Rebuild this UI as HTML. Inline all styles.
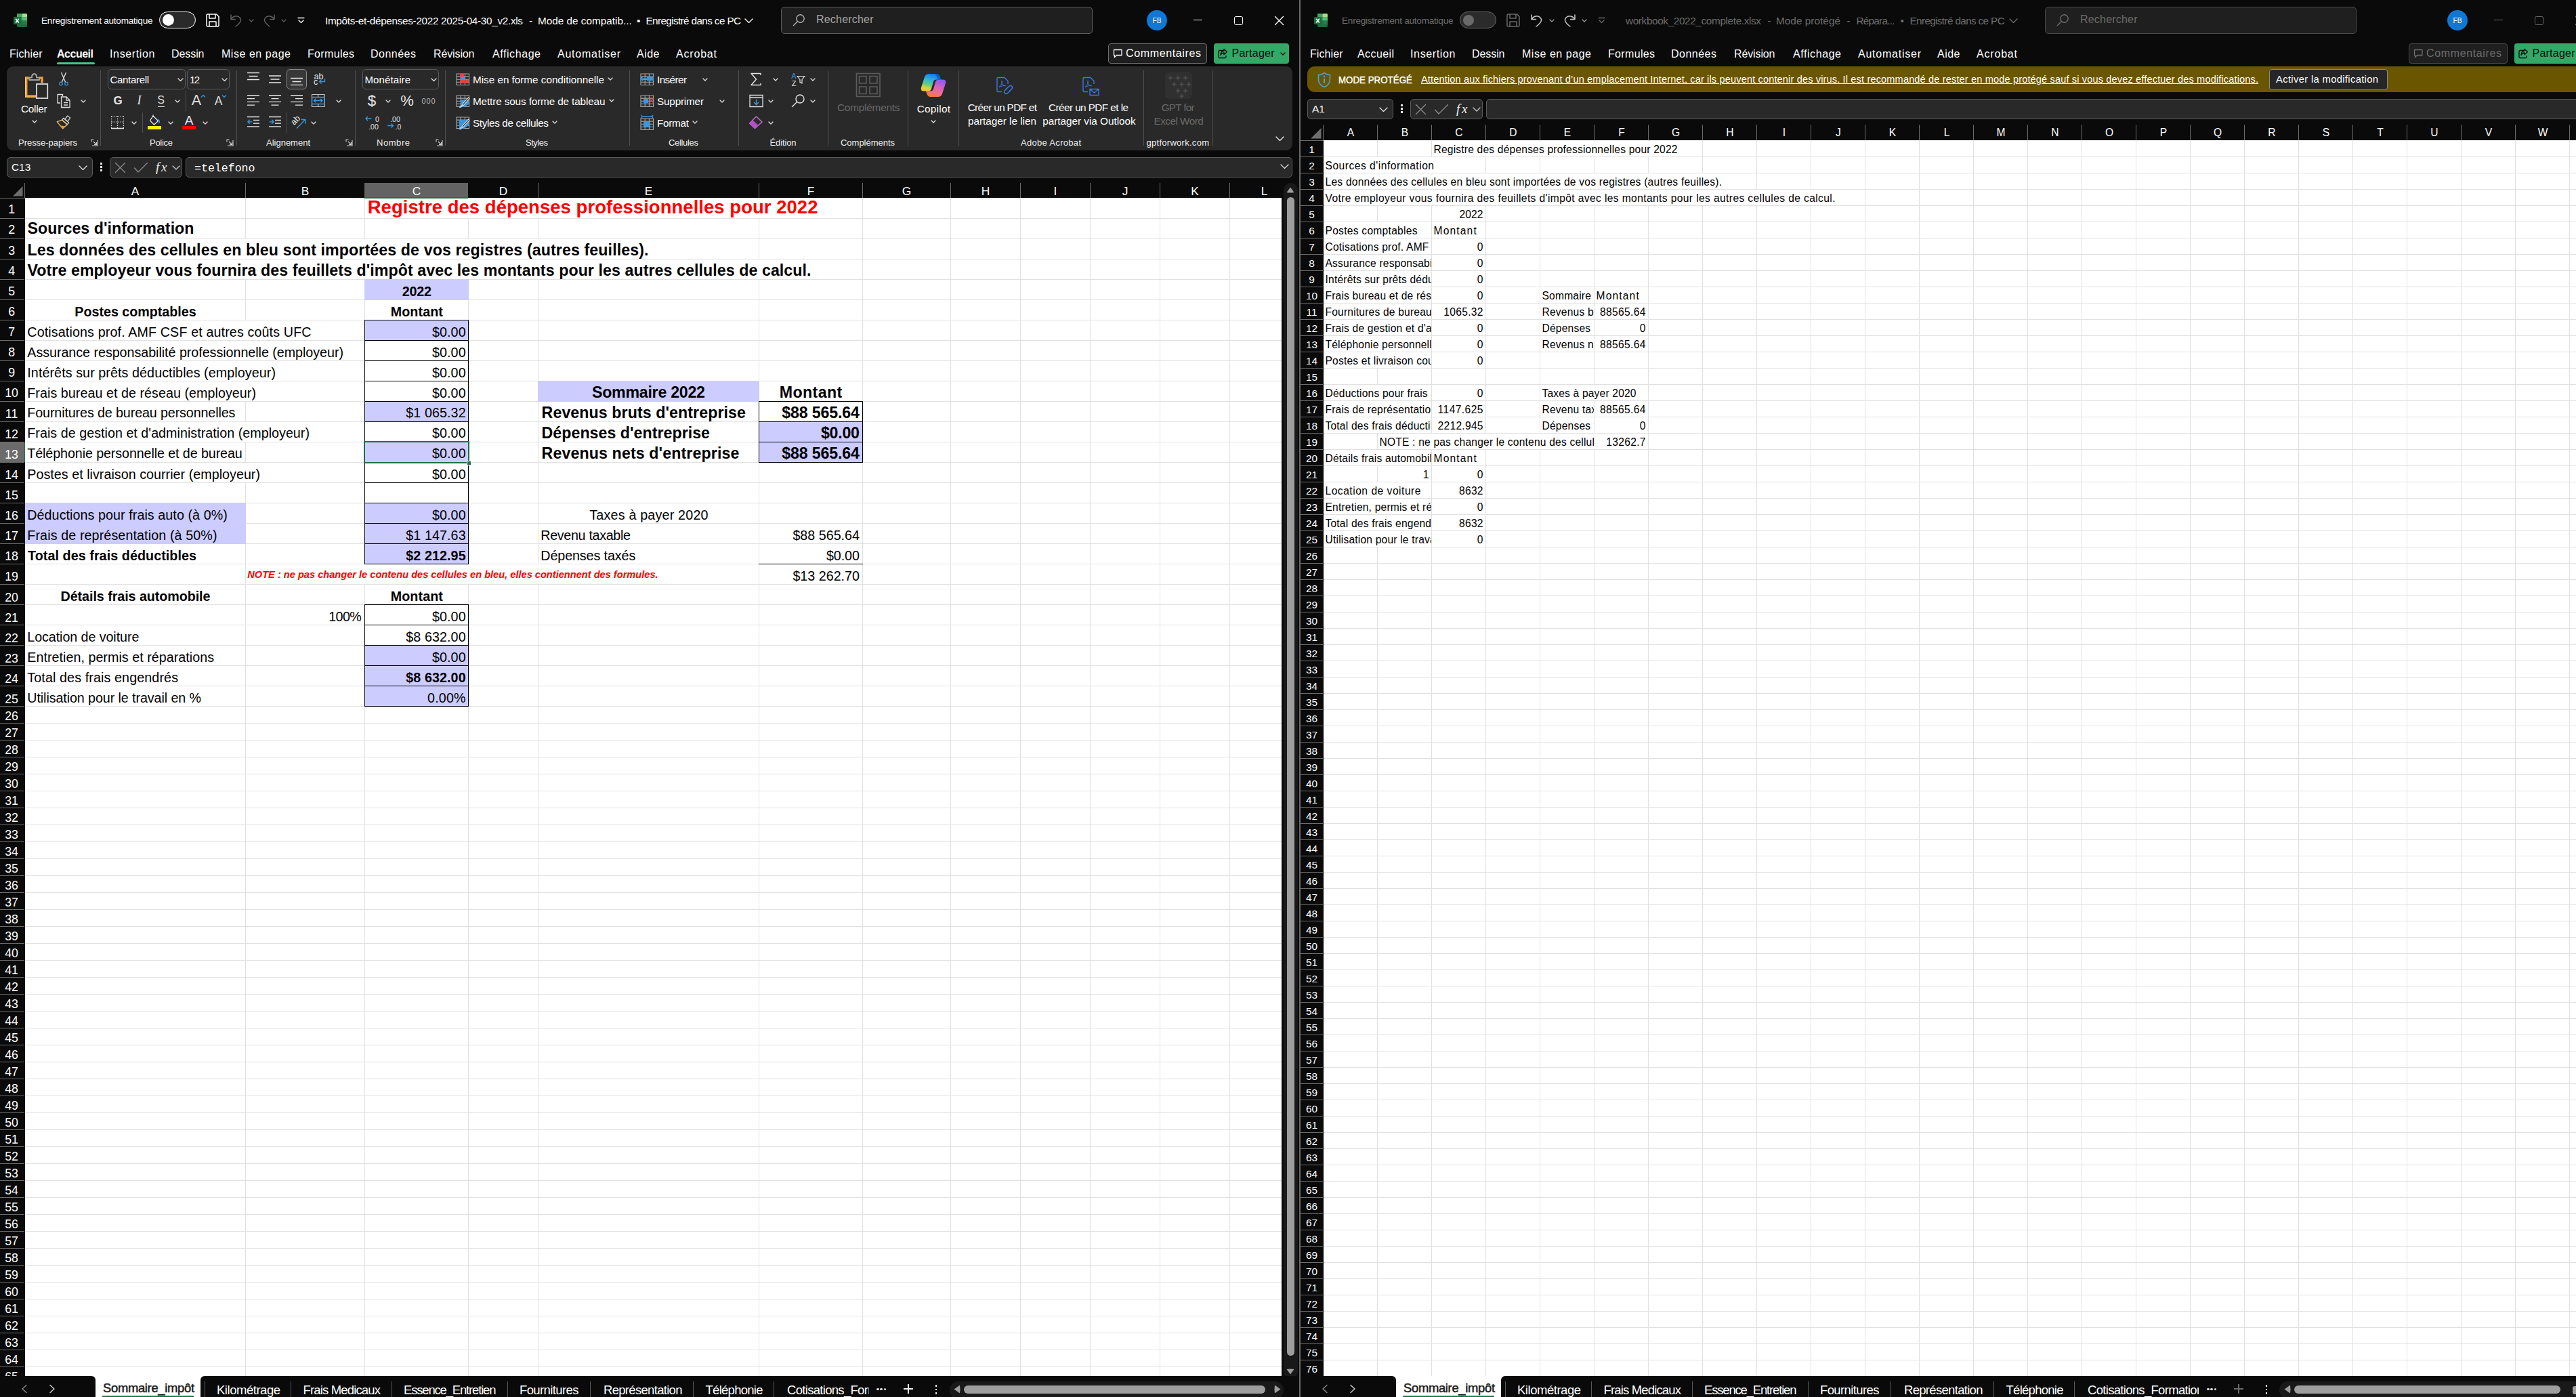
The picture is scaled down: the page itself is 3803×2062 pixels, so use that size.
<!DOCTYPE html>
<html lang="fr"><head><meta charset="utf-8"><title>Excel</title>
<style>
html,body{margin:0;padding:0}
body{width:3803px;height:2062px;background:#0a0a0a;overflow:hidden;position:relative;font-family:"Liberation Sans", sans-serif;}
div,span,svg{position:absolute;display:block}
span{white-space:pre}
</style></head>
<body>
<div style="left:0;top:0;width:1918px;height:2062px;overflow:hidden">
<div style="left:37px;top:292px;width:1855px;height:1739px;background:#fff;"></div>
<div style="left:37px;top:322px;width:1855px;height:1px;background:#e1e1e1;"></div>
<div style="left:37px;top:352px;width:1855px;height:1px;background:#e1e1e1;"></div>
<div style="left:37px;top:382px;width:1855px;height:1px;background:#e1e1e1;"></div>
<div style="left:37px;top:412px;width:1855px;height:1px;background:#e1e1e1;"></div>
<div style="left:37px;top:442px;width:1855px;height:1px;background:#e1e1e1;"></div>
<div style="left:37px;top:472px;width:1855px;height:1px;background:#e1e1e1;"></div>
<div style="left:37px;top:502px;width:1855px;height:1px;background:#e1e1e1;"></div>
<div style="left:37px;top:532px;width:1855px;height:1px;background:#e1e1e1;"></div>
<div style="left:37px;top:562px;width:1855px;height:1px;background:#e1e1e1;"></div>
<div style="left:37px;top:592px;width:1855px;height:1px;background:#e1e1e1;"></div>
<div style="left:37px;top:622px;width:1855px;height:1px;background:#e1e1e1;"></div>
<div style="left:37px;top:652px;width:1855px;height:1px;background:#e1e1e1;"></div>
<div style="left:37px;top:682px;width:1855px;height:1px;background:#e1e1e1;"></div>
<div style="left:37px;top:712px;width:1855px;height:1px;background:#e1e1e1;"></div>
<div style="left:37px;top:742px;width:1855px;height:1px;background:#e1e1e1;"></div>
<div style="left:37px;top:772px;width:1855px;height:1px;background:#e1e1e1;"></div>
<div style="left:37px;top:802px;width:1855px;height:1px;background:#e1e1e1;"></div>
<div style="left:37px;top:832px;width:1855px;height:1px;background:#e1e1e1;"></div>
<div style="left:37px;top:862px;width:1855px;height:1px;background:#e1e1e1;"></div>
<div style="left:37px;top:892px;width:1855px;height:1px;background:#e1e1e1;"></div>
<div style="left:37px;top:922px;width:1855px;height:1px;background:#e1e1e1;"></div>
<div style="left:37px;top:952px;width:1855px;height:1px;background:#e1e1e1;"></div>
<div style="left:37px;top:982px;width:1855px;height:1px;background:#e1e1e1;"></div>
<div style="left:37px;top:1012px;width:1855px;height:1px;background:#e1e1e1;"></div>
<div style="left:37px;top:1042px;width:1855px;height:1px;background:#e1e1e1;"></div>
<div style="left:37px;top:1067px;width:1855px;height:1px;background:#e1e1e1;"></div>
<div style="left:37px;top:1092px;width:1855px;height:1px;background:#e1e1e1;"></div>
<div style="left:37px;top:1117px;width:1855px;height:1px;background:#e1e1e1;"></div>
<div style="left:37px;top:1142px;width:1855px;height:1px;background:#e1e1e1;"></div>
<div style="left:37px;top:1167px;width:1855px;height:1px;background:#e1e1e1;"></div>
<div style="left:37px;top:1192px;width:1855px;height:1px;background:#e1e1e1;"></div>
<div style="left:37px;top:1217px;width:1855px;height:1px;background:#e1e1e1;"></div>
<div style="left:37px;top:1242px;width:1855px;height:1px;background:#e1e1e1;"></div>
<div style="left:37px;top:1267px;width:1855px;height:1px;background:#e1e1e1;"></div>
<div style="left:37px;top:1292px;width:1855px;height:1px;background:#e1e1e1;"></div>
<div style="left:37px;top:1317px;width:1855px;height:1px;background:#e1e1e1;"></div>
<div style="left:37px;top:1342px;width:1855px;height:1px;background:#e1e1e1;"></div>
<div style="left:37px;top:1367px;width:1855px;height:1px;background:#e1e1e1;"></div>
<div style="left:37px;top:1392px;width:1855px;height:1px;background:#e1e1e1;"></div>
<div style="left:37px;top:1417px;width:1855px;height:1px;background:#e1e1e1;"></div>
<div style="left:37px;top:1442px;width:1855px;height:1px;background:#e1e1e1;"></div>
<div style="left:37px;top:1467px;width:1855px;height:1px;background:#e1e1e1;"></div>
<div style="left:37px;top:1492px;width:1855px;height:1px;background:#e1e1e1;"></div>
<div style="left:37px;top:1517px;width:1855px;height:1px;background:#e1e1e1;"></div>
<div style="left:37px;top:1542px;width:1855px;height:1px;background:#e1e1e1;"></div>
<div style="left:37px;top:1567px;width:1855px;height:1px;background:#e1e1e1;"></div>
<div style="left:37px;top:1592px;width:1855px;height:1px;background:#e1e1e1;"></div>
<div style="left:37px;top:1617px;width:1855px;height:1px;background:#e1e1e1;"></div>
<div style="left:37px;top:1642px;width:1855px;height:1px;background:#e1e1e1;"></div>
<div style="left:37px;top:1667px;width:1855px;height:1px;background:#e1e1e1;"></div>
<div style="left:37px;top:1692px;width:1855px;height:1px;background:#e1e1e1;"></div>
<div style="left:37px;top:1717px;width:1855px;height:1px;background:#e1e1e1;"></div>
<div style="left:37px;top:1742px;width:1855px;height:1px;background:#e1e1e1;"></div>
<div style="left:37px;top:1767px;width:1855px;height:1px;background:#e1e1e1;"></div>
<div style="left:37px;top:1792px;width:1855px;height:1px;background:#e1e1e1;"></div>
<div style="left:37px;top:1817px;width:1855px;height:1px;background:#e1e1e1;"></div>
<div style="left:37px;top:1842px;width:1855px;height:1px;background:#e1e1e1;"></div>
<div style="left:37px;top:1867px;width:1855px;height:1px;background:#e1e1e1;"></div>
<div style="left:37px;top:1892px;width:1855px;height:1px;background:#e1e1e1;"></div>
<div style="left:37px;top:1917px;width:1855px;height:1px;background:#e1e1e1;"></div>
<div style="left:37px;top:1942px;width:1855px;height:1px;background:#e1e1e1;"></div>
<div style="left:37px;top:1967px;width:1855px;height:1px;background:#e1e1e1;"></div>
<div style="left:37px;top:1992px;width:1855px;height:1px;background:#e1e1e1;"></div>
<div style="left:37px;top:2017px;width:1855px;height:1px;background:#e1e1e1;"></div>
<div style="left:362px;top:292px;width:1px;height:1739px;background:#e1e1e1;"></div>
<div style="left:538px;top:292px;width:1px;height:1739px;background:#e1e1e1;"></div>
<div style="left:691px;top:292px;width:1px;height:1739px;background:#e1e1e1;"></div>
<div style="left:794px;top:292px;width:1px;height:1739px;background:#e1e1e1;"></div>
<div style="left:1120px;top:292px;width:1px;height:1739px;background:#e1e1e1;"></div>
<div style="left:1273px;top:292px;width:1px;height:1739px;background:#e1e1e1;"></div>
<div style="left:1403px;top:292px;width:1px;height:1739px;background:#e1e1e1;"></div>
<div style="left:1506px;top:292px;width:1px;height:1739px;background:#e1e1e1;"></div>
<div style="left:1609px;top:292px;width:1px;height:1739px;background:#e1e1e1;"></div>
<div style="left:1712px;top:292px;width:1px;height:1739px;background:#e1e1e1;"></div>
<div style="left:1815px;top:292px;width:1px;height:1739px;background:#e1e1e1;"></div>
<div style="left:691px;top:293px;width:1px;height:29px;background:#fff;"></div>
<div style="left:794px;top:293px;width:1px;height:29px;background:#fff;"></div>
<div style="left:1120px;top:293px;width:1px;height:29px;background:#fff;"></div>
<div style="left:362px;top:353px;width:1px;height:29px;background:#fff;"></div>
<div style="left:538px;top:353px;width:1px;height:29px;background:#fff;"></div>
<div style="left:691px;top:353px;width:1px;height:29px;background:#fff;"></div>
<div style="left:794px;top:353px;width:1px;height:29px;background:#fff;"></div>
<div style="left:362px;top:383px;width:1px;height:29px;background:#fff;"></div>
<div style="left:538px;top:383px;width:1px;height:29px;background:#fff;"></div>
<div style="left:691px;top:383px;width:1px;height:29px;background:#fff;"></div>
<div style="left:794px;top:383px;width:1px;height:29px;background:#fff;"></div>
<div style="left:1120px;top:383px;width:1px;height:29px;background:#fff;"></div>
<div style="left:362px;top:473px;width:1px;height:29px;background:#fff;"></div>
<div style="left:362px;top:503px;width:1px;height:29px;background:#fff;"></div>
<div style="left:362px;top:533px;width:1px;height:29px;background:#fff;"></div>
<div style="left:362px;top:563px;width:1px;height:29px;background:#fff;"></div>
<div style="left:362px;top:623px;width:1px;height:29px;background:#fff;"></div>
<div style="left:362px;top:683px;width:1px;height:29px;background:#fff;"></div>
<div style="left:538px;top:833px;width:1px;height:29px;background:#fff;"></div>
<div style="left:691px;top:833px;width:1px;height:29px;background:#fff;"></div>
<div style="left:794px;top:833px;width:1px;height:29px;background:#fff;"></div>
<div style="left:538px;top:412px;width:154px;height:31px;background:#ccccff;"></div>
<div style="left:538px;top:472px;width:154px;height:31px;background:#ccccff;"></div>
<div style="left:538px;top:592px;width:154px;height:31px;background:#ccccff;"></div>
<div style="left:538px;top:652px;width:154px;height:31px;background:#ccccff;"></div>
<div style="left:36px;top:742px;width:327px;height:31px;background:#ccccff;"></div>
<div style="left:36px;top:772px;width:327px;height:31px;background:#ccccff;"></div>
<div style="left:538px;top:742px;width:154px;height:31px;background:#ccccff;"></div>
<div style="left:538px;top:772px;width:154px;height:31px;background:#ccccff;"></div>
<div style="left:538px;top:802px;width:154px;height:31px;background:#ccccff;"></div>
<div style="left:538px;top:952px;width:154px;height:31px;background:#ccccff;"></div>
<div style="left:538px;top:982px;width:154px;height:31px;background:#ccccff;"></div>
<div style="left:538px;top:1012px;width:154px;height:31px;background:#ccccff;"></div>
<div style="left:794px;top:562px;width:327px;height:31px;background:#ccccff;"></div>
<div style="left:1120px;top:622px;width:154px;height:31px;background:#ccccff;"></div>
<div style="left:1120px;top:652px;width:154px;height:31px;background:#ccccff;"></div>
<div style="left:538px;top:472px;width:154px;height:31px;border:1px solid #000;box-sizing:border-box;"></div>
<div style="left:538px;top:502px;width:154px;height:31px;border:1px solid #000;box-sizing:border-box;"></div>
<div style="left:538px;top:532px;width:154px;height:31px;border:1px solid #000;box-sizing:border-box;"></div>
<div style="left:538px;top:562px;width:154px;height:31px;border:1px solid #000;box-sizing:border-box;"></div>
<div style="left:538px;top:592px;width:154px;height:31px;border:1px solid #000;box-sizing:border-box;"></div>
<div style="left:538px;top:622px;width:154px;height:31px;border:1px solid #000;box-sizing:border-box;"></div>
<div style="left:538px;top:652px;width:154px;height:31px;border:1px solid #000;box-sizing:border-box;"></div>
<div style="left:538px;top:682px;width:154px;height:31px;border:1px solid #000;box-sizing:border-box;"></div>
<div style="left:538px;top:712px;width:154px;height:31px;border:1px solid #000;box-sizing:border-box;"></div>
<div style="left:538px;top:742px;width:154px;height:31px;border:1px solid #000;box-sizing:border-box;"></div>
<div style="left:538px;top:772px;width:154px;height:31px;border:1px solid #000;box-sizing:border-box;"></div>
<div style="left:538px;top:802px;width:154px;height:31px;border:1px solid #000;box-sizing:border-box;"></div>
<div style="left:538px;top:892px;width:154px;height:31px;border:1px solid #000;box-sizing:border-box;"></div>
<div style="left:538px;top:922px;width:154px;height:31px;border:1px solid #000;box-sizing:border-box;"></div>
<div style="left:538px;top:952px;width:154px;height:31px;border:1px solid #000;box-sizing:border-box;"></div>
<div style="left:538px;top:982px;width:154px;height:31px;border:1px solid #000;box-sizing:border-box;"></div>
<div style="left:538px;top:1012px;width:154px;height:31px;border:1px solid #000;box-sizing:border-box;"></div>
<div style="left:1120px;top:592px;width:154px;height:31px;border:1px solid #000;box-sizing:border-box;"></div>
<div style="left:1120px;top:622px;width:154px;height:31px;border:1px solid #000;box-sizing:border-box;"></div>
<div style="left:1120px;top:652px;width:154px;height:31px;border:1px solid #000;box-sizing:border-box;"></div>
<div style="left:1120px;top:832px;width:154px;height:1px;background:#000;"></div>
<div style="left:537px;top:651px;width:156px;height:33px;border:2px solid #1e7145;box-sizing:border-box;"></div>
<div style="left:689px;top:680px;width:7px;height:7px;background:#fff;"></div>
<div style="left:690px;top:681px;width:5px;height:5px;background:#1e7145;"></div>
<span style="left:542.70px;top:287.97px;line-height:35px;font-size:27.5px;color:#ff0000;font-weight:700;letter-spacing:0.032px;">Registre des dépenses professionnelles pour 2022</span>
<span style="left:40.50px;top:323.46px;line-height:29px;font-size:23.2px;color:#000;font-weight:700;letter-spacing:0.042px;">Sources d&#x27;information</span>
<span style="left:40.50px;top:354.96px;line-height:29px;font-size:23.2px;color:#000;font-weight:700;letter-spacing:0.104px;">Les données des cellules en bleu sont importées de vos registres (autres feuilles).</span>
<span style="left:40.50px;top:384.96px;line-height:29px;font-size:23.2px;color:#000;font-weight:700;letter-spacing:0.074px;">Votre employeur vous fournira des feuillets d&#x27;impôt avec les montants pour les autres cellules de calcul.</span>
<span style="left:593.70px;top:417.87px;line-height:25px;font-size:19.7px;color:#000;font-weight:700;letter-spacing:-0.204px;">2022</span>
<span style="left:110.35px;top:447.87px;line-height:25px;font-size:19.7px;color:#000;font-weight:700;letter-spacing:-0.009px;">Postes comptables</span>
<span style="left:576.70px;top:447.87px;line-height:25px;font-size:19.7px;color:#000;font-weight:700;letter-spacing:0.109px;">Montant</span>
<span style="left:40.30px;top:477.87px;line-height:25px;font-size:19.7px;color:#000;letter-spacing:0.128px;">Cotisations prof. AMF CSF et autres coûts UFC</span>
<span style="left:40.30px;top:507.87px;line-height:25px;font-size:19.7px;color:#000;letter-spacing:-0.033px;">Assurance responsabilité professionnelle (employeur)</span>
<span style="left:40.30px;top:537.87px;line-height:25px;font-size:19.7px;color:#000;letter-spacing:0.083px;">Intérêts sur prêts déductibles (employeur)</span>
<span style="left:40.30px;top:567.87px;line-height:25px;font-size:19.7px;color:#000;letter-spacing:0.049px;">Frais bureau et de réseau (employeur)</span>
<span style="left:40.30px;top:597.17px;line-height:25px;font-size:19.7px;color:#000;letter-spacing:-0.113px;">Fournitures de bureau personnelles</span>
<span style="left:40.30px;top:627.17px;line-height:25px;font-size:19.7px;color:#000;letter-spacing:0.032px;">Frais de gestion et d&#x27;administration (employeur)</span>
<span style="left:40.30px;top:657.17px;line-height:25px;font-size:19.7px;color:#000;letter-spacing:-0.095px;">Téléphonie personnelle et de bureau</span>
<span style="left:40.30px;top:687.87px;line-height:25px;font-size:19.7px;color:#000;letter-spacing:0.032px;">Postes et livraison courrier (employeur)</span>
<span style="left:40.30px;top:747.87px;line-height:25px;font-size:19.7px;color:#000;letter-spacing:0.069px;">Déductions pour frais auto (à 0%)</span>
<span style="left:40.30px;top:777.87px;line-height:25px;font-size:19.7px;color:#000;letter-spacing:0.111px;">Frais de représentation (à 50%)</span>
<span style="left:40.30px;top:927.87px;line-height:25px;font-size:19.7px;color:#000;letter-spacing:-0.071px;">Location de voiture</span>
<span style="left:40.30px;top:958.37px;line-height:25px;font-size:19.7px;color:#000;letter-spacing:0.033px;">Entretien, permis et réparations</span>
<span style="left:40.30px;top:988.37px;line-height:25px;font-size:19.7px;color:#000;letter-spacing:0.113px;">Total des frais engendrés</span>
<span style="left:40.30px;top:1018.37px;line-height:25px;font-size:19.7px;color:#000;letter-spacing:-0.085px;">Utilisation pour le travail en %</span>
<span style="left:41.00px;top:807.87px;line-height:25px;font-size:19.7px;color:#000;font-weight:700;letter-spacing:0.081px;">Total des frais déductibles</span>
<span style="left:89.51px;top:867.87px;line-height:25px;font-size:19.7px;color:#000;font-weight:700;letter-spacing:-0.048px;">Détails frais automobile</span>
<span style="left:576.70px;top:867.87px;line-height:25px;font-size:19.7px;color:#000;font-weight:700;letter-spacing:0.109px;">Montant</span>
<span style="left:638.00px;top:477.87px;line-height:25px;font-size:19.7px;color:#000;letter-spacing:0.08px;">$0.00</span>
<span style="left:638.00px;top:507.87px;line-height:25px;font-size:19.7px;color:#000;letter-spacing:0.08px;">$0.00</span>
<span style="left:638.00px;top:537.87px;line-height:25px;font-size:19.7px;color:#000;letter-spacing:0.08px;">$0.00</span>
<span style="left:638.00px;top:567.87px;line-height:25px;font-size:19.7px;color:#000;letter-spacing:0.08px;">$0.00</span>
<span style="left:638.00px;top:627.17px;line-height:25px;font-size:19.7px;color:#000;letter-spacing:0.08px;">$0.00</span>
<span style="left:638.00px;top:657.17px;line-height:25px;font-size:19.7px;color:#000;letter-spacing:0.08px;">$0.00</span>
<span style="left:638.00px;top:687.87px;line-height:25px;font-size:19.7px;color:#000;letter-spacing:0.08px;">$0.00</span>
<span style="left:638.00px;top:747.87px;line-height:25px;font-size:19.7px;color:#000;letter-spacing:0.08px;">$0.00</span>
<span style="left:638.00px;top:897.87px;line-height:25px;font-size:19.7px;color:#000;letter-spacing:0.08px;">$0.00</span>
<span style="left:638.00px;top:958.37px;line-height:25px;font-size:19.7px;color:#000;letter-spacing:0.08px;">$0.00</span>
<span style="left:599.30px;top:597.17px;line-height:25px;font-size:19.7px;color:#000;letter-spacing:0.088px;">$1 065.32</span>
<span style="left:599.30px;top:777.87px;line-height:25px;font-size:19.7px;color:#000;letter-spacing:0.088px;">$1 147.63</span>
<span style="left:599.30px;top:807.87px;line-height:25px;font-size:19.7px;color:#000;font-weight:700;letter-spacing:0.088px;">$2 212.95</span>
<span style="left:599.30px;top:927.87px;line-height:25px;font-size:19.7px;color:#000;letter-spacing:0.088px;">$8 632.00</span>
<span style="left:599.30px;top:988.37px;line-height:25px;font-size:19.7px;color:#000;font-weight:700;letter-spacing:0.088px;">$8 632.00</span>
<span style="left:631.00px;top:1018.37px;line-height:25px;font-size:19.7px;color:#000;letter-spacing:0.193px;">0.00%</span>
<span style="left:485.30px;top:897.87px;line-height:25px;font-size:19.7px;color:#000;letter-spacing:-0.653px;">100%</span>
<span style="left:874.00px;top:565.46px;line-height:29px;font-size:23.2px;color:#000;font-weight:700;letter-spacing:-0.263px;">Sommaire 2022</span>
<span style="left:1150.85px;top:565.46px;line-height:29px;font-size:23.2px;color:#000;font-weight:700;letter-spacing:0.357px;">Montant</span>
<span style="left:799.60px;top:595.46px;line-height:29px;font-size:23.2px;color:#000;font-weight:700;letter-spacing:0.08px;">Revenus bruts d&#x27;entreprise</span>
<span style="left:799.60px;top:625.46px;line-height:29px;font-size:23.2px;color:#000;font-weight:700;letter-spacing:0.03px;">Dépenses d&#x27;entreprise</span>
<span style="left:799.60px;top:655.46px;line-height:29px;font-size:23.2px;color:#000;font-weight:700;letter-spacing:0.115px;">Revenus nets d&#x27;entreprise</span>
<span style="left:1154.20px;top:595.46px;line-height:29px;font-size:23.2px;color:#000;font-weight:700;letter-spacing:-0.14px;">$88 565.64</span>
<span style="left:1211.90px;top:625.46px;line-height:29px;font-size:23.2px;color:#000;font-weight:700;letter-spacing:-0.233px;">$0.00</span>
<span style="left:1154.20px;top:655.46px;line-height:29px;font-size:23.2px;color:#000;font-weight:700;letter-spacing:-0.14px;">$88 565.64</span>
<span style="left:870.30px;top:747.87px;line-height:25px;font-size:19.7px;color:#000;letter-spacing:0.197px;">Taxes à payer 2020</span>
<span style="left:798.30px;top:777.87px;line-height:25px;font-size:19.7px;color:#000;letter-spacing:-0.318px;">Revenu taxable</span>
<span style="left:798.30px;top:807.87px;line-height:25px;font-size:19.7px;color:#000;letter-spacing:-0.091px;">Dépenses taxés</span>
<span style="left:1170.40px;top:777.87px;line-height:25px;font-size:19.7px;color:#000;letter-spacing:0.006px;">$88 565.64</span>
<span style="left:1219.90px;top:807.87px;line-height:25px;font-size:19.7px;color:#000;letter-spacing:-0.045px;">$0.00</span>
<span style="left:1170.40px;top:837.87px;line-height:25px;font-size:19.7px;color:#000;letter-spacing:0.006px;">$13 262.70</span>
<span style="left:365.30px;top:838.94px;line-height:19px;font-size:14.6px;color:#ff0000;font-weight:700;font-style:italic;letter-spacing:0.006px;">NOTE : ne pas changer le contenu des cellules en bleu, elles contiennent des formules.</span>
<div style="left:0px;top:270px;width:1892px;height:22px;background:#0a0a0a;"></div>
<div style="left:0px;top:292px;width:37px;height:1739px;background:#0a0a0a;"></div>
<div style="left:538px;top:270px;width:153px;height:22px;background:#636363;"></div>
<div style="left:538px;top:291px;width:153px;height:2px;background:#1e7145;"></div>
<div style="left:0px;top:653px;width:36px;height:29px;background:#6b6b6b;"></div>
<div style="left:35.5px;top:653px;width:1.5px;height:29px;background:#1e7145;"></div>
<span style="left:193.73px;top:270.51px;line-height:22px;font-size:17.3px;color:#ffffff;">A</span>
<div style="left:362px;top:270px;width:1px;height:22px;background:#6c6c6c;"></div>
<span style="left:444.73px;top:270.51px;line-height:22px;font-size:17.3px;color:#ffffff;">B</span>
<span style="left:608.76px;top:270.51px;line-height:22px;font-size:17.3px;color:#ffffff;">C</span>
<span style="left:736.76px;top:270.51px;line-height:22px;font-size:17.3px;color:#ffffff;">D</span>
<div style="left:794px;top:270px;width:1px;height:22px;background:#6c6c6c;"></div>
<span style="left:951.73px;top:270.51px;line-height:22px;font-size:17.3px;color:#ffffff;">E</span>
<div style="left:1120px;top:270px;width:1px;height:22px;background:#6c6c6c;"></div>
<span style="left:1191.72px;top:270.51px;line-height:22px;font-size:17.3px;color:#ffffff;">F</span>
<div style="left:1273px;top:270px;width:1px;height:22px;background:#6c6c6c;"></div>
<span style="left:1331.77px;top:270.51px;line-height:22px;font-size:17.3px;color:#ffffff;">G</span>
<div style="left:1403px;top:270px;width:1px;height:22px;background:#6c6c6c;"></div>
<span style="left:1448.76px;top:270.51px;line-height:22px;font-size:17.3px;color:#ffffff;">H</span>
<div style="left:1506px;top:270px;width:1px;height:22px;background:#6c6c6c;"></div>
<span style="left:1555.59px;top:270.51px;line-height:22px;font-size:17.3px;color:#ffffff;">I</span>
<div style="left:1609px;top:270px;width:1px;height:22px;background:#6c6c6c;"></div>
<span style="left:1656.68px;top:270.51px;line-height:22px;font-size:17.3px;color:#ffffff;">J</span>
<div style="left:1712px;top:270px;width:1px;height:22px;background:#6c6c6c;"></div>
<span style="left:1758.23px;top:270.51px;line-height:22px;font-size:17.3px;color:#ffffff;">K</span>
<div style="left:1815px;top:270px;width:1px;height:22px;background:#6c6c6c;"></div>
<span style="left:1861.69px;top:270.51px;line-height:22px;font-size:17.3px;color:#ffffff;">L</span>
<div style="left:362px;top:270px;width:1px;height:22px;background:#6c6c6c;"></div>
<div style="left:36px;top:270px;width:1px;height:22px;background:#6c6c6c;"></div>
<div style="left:0px;top:292px;width:37px;height:1px;background:#6c6c6c;"></div>
<svg style="left:18px;top:275px;" width="16" height="15" viewBox="0 0 16 15"><path d="M15.500 0 V14.500 H1 Z" fill="#6e6e6e"/></svg>
<div style="left:0px;top:322px;width:36px;height:1px;background:#6c6c6c;"></div>
<span style="left:12.15px;top:298.33px;line-height:23px;font-size:17.8px;color:#ffffff;">1</span>
<div style="left:0px;top:352px;width:36px;height:1px;background:#6c6c6c;"></div>
<span style="left:12.15px;top:328.45px;line-height:23px;font-size:17.8px;color:#ffffff;">2</span>
<div style="left:0px;top:382px;width:36px;height:1px;background:#6c6c6c;"></div>
<span style="left:12.15px;top:358.57px;line-height:23px;font-size:17.8px;color:#ffffff;">3</span>
<div style="left:0px;top:412px;width:36px;height:1px;background:#6c6c6c;"></div>
<span style="left:12.15px;top:388.68px;line-height:23px;font-size:17.8px;color:#ffffff;">4</span>
<div style="left:0px;top:442px;width:36px;height:1px;background:#6c6c6c;"></div>
<span style="left:12.15px;top:418.80px;line-height:23px;font-size:17.8px;color:#ffffff;">5</span>
<div style="left:0px;top:472px;width:36px;height:1px;background:#6c6c6c;"></div>
<span style="left:12.15px;top:448.92px;line-height:23px;font-size:17.8px;color:#ffffff;">6</span>
<div style="left:0px;top:502px;width:36px;height:1px;background:#6c6c6c;"></div>
<span style="left:12.15px;top:479.03px;line-height:23px;font-size:17.8px;color:#ffffff;">7</span>
<div style="left:0px;top:532px;width:36px;height:1px;background:#6c6c6c;"></div>
<span style="left:12.15px;top:509.15px;line-height:23px;font-size:17.8px;color:#ffffff;">8</span>
<div style="left:0px;top:562px;width:36px;height:1px;background:#6c6c6c;"></div>
<span style="left:12.15px;top:539.27px;line-height:23px;font-size:17.8px;color:#ffffff;">9</span>
<div style="left:0px;top:592px;width:36px;height:1px;background:#6c6c6c;"></div>
<span style="left:7.21px;top:569.39px;line-height:23px;font-size:17.8px;color:#ffffff;">10</span>
<div style="left:0px;top:622px;width:36px;height:1px;background:#6c6c6c;"></div>
<span style="left:7.87px;top:599.50px;line-height:23px;font-size:17.8px;color:#ffffff;">11</span>
<div style="left:0px;top:652px;width:36px;height:1px;background:#6c6c6c;"></div>
<span style="left:7.21px;top:629.62px;line-height:23px;font-size:17.8px;color:#ffffff;">12</span>
<div style="left:0px;top:682px;width:36px;height:1px;background:#6c6c6c;"></div>
<span style="left:7.21px;top:659.74px;line-height:23px;font-size:17.8px;color:#ffffff;">13</span>
<div style="left:0px;top:712px;width:36px;height:1px;background:#6c6c6c;"></div>
<span style="left:7.21px;top:689.85px;line-height:23px;font-size:17.8px;color:#ffffff;">14</span>
<div style="left:0px;top:742px;width:36px;height:1px;background:#6c6c6c;"></div>
<span style="left:7.21px;top:719.97px;line-height:23px;font-size:17.8px;color:#ffffff;">15</span>
<div style="left:0px;top:772px;width:36px;height:1px;background:#6c6c6c;"></div>
<span style="left:7.21px;top:750.09px;line-height:23px;font-size:17.8px;color:#ffffff;">16</span>
<div style="left:0px;top:802px;width:36px;height:1px;background:#6c6c6c;"></div>
<span style="left:7.21px;top:780.20px;line-height:23px;font-size:17.8px;color:#ffffff;">17</span>
<div style="left:0px;top:832px;width:36px;height:1px;background:#6c6c6c;"></div>
<span style="left:7.21px;top:810.32px;line-height:23px;font-size:17.8px;color:#ffffff;">18</span>
<div style="left:0px;top:862px;width:36px;height:1px;background:#6c6c6c;"></div>
<span style="left:7.21px;top:840.44px;line-height:23px;font-size:17.8px;color:#ffffff;">19</span>
<div style="left:0px;top:892px;width:36px;height:1px;background:#6c6c6c;"></div>
<span style="left:7.21px;top:870.56px;line-height:23px;font-size:17.8px;color:#ffffff;">20</span>
<div style="left:0px;top:922px;width:36px;height:1px;background:#6c6c6c;"></div>
<span style="left:7.21px;top:900.67px;line-height:23px;font-size:17.8px;color:#ffffff;">21</span>
<div style="left:0px;top:952px;width:36px;height:1px;background:#6c6c6c;"></div>
<span style="left:7.21px;top:930.79px;line-height:23px;font-size:17.8px;color:#ffffff;">22</span>
<div style="left:0px;top:982px;width:36px;height:1px;background:#6c6c6c;"></div>
<span style="left:7.21px;top:960.91px;line-height:23px;font-size:17.8px;color:#ffffff;">23</span>
<div style="left:0px;top:1012px;width:36px;height:1px;background:#6c6c6c;"></div>
<span style="left:7.21px;top:991.02px;line-height:23px;font-size:17.8px;color:#ffffff;">24</span>
<div style="left:0px;top:1042px;width:36px;height:1px;background:#6c6c6c;"></div>
<span style="left:7.21px;top:1021.14px;line-height:23px;font-size:17.8px;color:#ffffff;">25</span>
<div style="left:0px;top:1067px;width:36px;height:1px;background:#6c6c6c;"></div>
<span style="left:7.21px;top:1045.83px;line-height:23px;font-size:17.8px;color:#ffffff;">26</span>
<div style="left:0px;top:1092px;width:36px;height:1px;background:#6c6c6c;"></div>
<span style="left:7.21px;top:1070.83px;line-height:23px;font-size:17.8px;color:#ffffff;">27</span>
<div style="left:0px;top:1117px;width:36px;height:1px;background:#6c6c6c;"></div>
<span style="left:7.21px;top:1095.83px;line-height:23px;font-size:17.8px;color:#ffffff;">28</span>
<div style="left:0px;top:1142px;width:36px;height:1px;background:#6c6c6c;"></div>
<span style="left:7.21px;top:1120.83px;line-height:23px;font-size:17.8px;color:#ffffff;">29</span>
<div style="left:0px;top:1167px;width:36px;height:1px;background:#6c6c6c;"></div>
<span style="left:7.21px;top:1145.83px;line-height:23px;font-size:17.8px;color:#ffffff;">30</span>
<div style="left:0px;top:1192px;width:36px;height:1px;background:#6c6c6c;"></div>
<span style="left:7.21px;top:1170.83px;line-height:23px;font-size:17.8px;color:#ffffff;">31</span>
<div style="left:0px;top:1217px;width:36px;height:1px;background:#6c6c6c;"></div>
<span style="left:7.21px;top:1195.83px;line-height:23px;font-size:17.8px;color:#ffffff;">32</span>
<div style="left:0px;top:1242px;width:36px;height:1px;background:#6c6c6c;"></div>
<span style="left:7.21px;top:1220.83px;line-height:23px;font-size:17.8px;color:#ffffff;">33</span>
<div style="left:0px;top:1267px;width:36px;height:1px;background:#6c6c6c;"></div>
<span style="left:7.21px;top:1245.83px;line-height:23px;font-size:17.8px;color:#ffffff;">34</span>
<div style="left:0px;top:1292px;width:36px;height:1px;background:#6c6c6c;"></div>
<span style="left:7.21px;top:1270.83px;line-height:23px;font-size:17.8px;color:#ffffff;">35</span>
<div style="left:0px;top:1317px;width:36px;height:1px;background:#6c6c6c;"></div>
<span style="left:7.21px;top:1295.83px;line-height:23px;font-size:17.8px;color:#ffffff;">36</span>
<div style="left:0px;top:1342px;width:36px;height:1px;background:#6c6c6c;"></div>
<span style="left:7.21px;top:1320.83px;line-height:23px;font-size:17.8px;color:#ffffff;">37</span>
<div style="left:0px;top:1367px;width:36px;height:1px;background:#6c6c6c;"></div>
<span style="left:7.21px;top:1345.83px;line-height:23px;font-size:17.8px;color:#ffffff;">38</span>
<div style="left:0px;top:1392px;width:36px;height:1px;background:#6c6c6c;"></div>
<span style="left:7.21px;top:1370.83px;line-height:23px;font-size:17.8px;color:#ffffff;">39</span>
<div style="left:0px;top:1417px;width:36px;height:1px;background:#6c6c6c;"></div>
<span style="left:7.21px;top:1395.83px;line-height:23px;font-size:17.8px;color:#ffffff;">40</span>
<div style="left:0px;top:1442px;width:36px;height:1px;background:#6c6c6c;"></div>
<span style="left:7.21px;top:1420.83px;line-height:23px;font-size:17.8px;color:#ffffff;">41</span>
<div style="left:0px;top:1467px;width:36px;height:1px;background:#6c6c6c;"></div>
<span style="left:7.21px;top:1445.83px;line-height:23px;font-size:17.8px;color:#ffffff;">42</span>
<div style="left:0px;top:1492px;width:36px;height:1px;background:#6c6c6c;"></div>
<span style="left:7.21px;top:1470.83px;line-height:23px;font-size:17.8px;color:#ffffff;">43</span>
<div style="left:0px;top:1517px;width:36px;height:1px;background:#6c6c6c;"></div>
<span style="left:7.21px;top:1495.83px;line-height:23px;font-size:17.8px;color:#ffffff;">44</span>
<div style="left:0px;top:1542px;width:36px;height:1px;background:#6c6c6c;"></div>
<span style="left:7.21px;top:1520.83px;line-height:23px;font-size:17.8px;color:#ffffff;">45</span>
<div style="left:0px;top:1567px;width:36px;height:1px;background:#6c6c6c;"></div>
<span style="left:7.21px;top:1545.83px;line-height:23px;font-size:17.8px;color:#ffffff;">46</span>
<div style="left:0px;top:1592px;width:36px;height:1px;background:#6c6c6c;"></div>
<span style="left:7.21px;top:1570.83px;line-height:23px;font-size:17.8px;color:#ffffff;">47</span>
<div style="left:0px;top:1617px;width:36px;height:1px;background:#6c6c6c;"></div>
<span style="left:7.21px;top:1595.83px;line-height:23px;font-size:17.8px;color:#ffffff;">48</span>
<div style="left:0px;top:1642px;width:36px;height:1px;background:#6c6c6c;"></div>
<span style="left:7.21px;top:1620.83px;line-height:23px;font-size:17.8px;color:#ffffff;">49</span>
<div style="left:0px;top:1667px;width:36px;height:1px;background:#6c6c6c;"></div>
<span style="left:7.21px;top:1645.83px;line-height:23px;font-size:17.8px;color:#ffffff;">50</span>
<div style="left:0px;top:1692px;width:36px;height:1px;background:#6c6c6c;"></div>
<span style="left:7.21px;top:1670.83px;line-height:23px;font-size:17.8px;color:#ffffff;">51</span>
<div style="left:0px;top:1717px;width:36px;height:1px;background:#6c6c6c;"></div>
<span style="left:7.21px;top:1695.83px;line-height:23px;font-size:17.8px;color:#ffffff;">52</span>
<div style="left:0px;top:1742px;width:36px;height:1px;background:#6c6c6c;"></div>
<span style="left:7.21px;top:1720.83px;line-height:23px;font-size:17.8px;color:#ffffff;">53</span>
<div style="left:0px;top:1767px;width:36px;height:1px;background:#6c6c6c;"></div>
<span style="left:7.21px;top:1745.83px;line-height:23px;font-size:17.8px;color:#ffffff;">54</span>
<div style="left:0px;top:1792px;width:36px;height:1px;background:#6c6c6c;"></div>
<span style="left:7.21px;top:1770.83px;line-height:23px;font-size:17.8px;color:#ffffff;">55</span>
<div style="left:0px;top:1817px;width:36px;height:1px;background:#6c6c6c;"></div>
<span style="left:7.21px;top:1795.83px;line-height:23px;font-size:17.8px;color:#ffffff;">56</span>
<div style="left:0px;top:1842px;width:36px;height:1px;background:#6c6c6c;"></div>
<span style="left:7.21px;top:1820.83px;line-height:23px;font-size:17.8px;color:#ffffff;">57</span>
<div style="left:0px;top:1867px;width:36px;height:1px;background:#6c6c6c;"></div>
<span style="left:7.21px;top:1845.83px;line-height:23px;font-size:17.8px;color:#ffffff;">58</span>
<div style="left:0px;top:1892px;width:36px;height:1px;background:#6c6c6c;"></div>
<span style="left:7.21px;top:1870.83px;line-height:23px;font-size:17.8px;color:#ffffff;">59</span>
<div style="left:0px;top:1917px;width:36px;height:1px;background:#6c6c6c;"></div>
<span style="left:7.21px;top:1895.83px;line-height:23px;font-size:17.8px;color:#ffffff;">60</span>
<div style="left:0px;top:1942px;width:36px;height:1px;background:#6c6c6c;"></div>
<span style="left:7.21px;top:1920.83px;line-height:23px;font-size:17.8px;color:#ffffff;">61</span>
<div style="left:0px;top:1967px;width:36px;height:1px;background:#6c6c6c;"></div>
<span style="left:7.21px;top:1945.83px;line-height:23px;font-size:17.8px;color:#ffffff;">62</span>
<div style="left:0px;top:1992px;width:36px;height:1px;background:#6c6c6c;"></div>
<span style="left:7.21px;top:1970.83px;line-height:23px;font-size:17.8px;color:#ffffff;">63</span>
<div style="left:0px;top:2017px;width:36px;height:1px;background:#6c6c6c;"></div>
<span style="left:7.21px;top:1995.83px;line-height:23px;font-size:17.8px;color:#ffffff;">64</span>
<div style="left:0px;top:2042px;width:36px;height:1px;background:#6c6c6c;"></div>
<span style="left:7.21px;top:2020.83px;line-height:23px;font-size:17.8px;color:#ffffff;">65</span>
<div style="left:1892px;top:270px;width:26px;height:1765px;background:#0a0a0a;"></div>
<div style="left:1895px;top:270px;width:21px;height:1765px;background:#191919;border-radius:10.5px;"></div>
<svg style="left:1899px;top:276px;" width="12" height="9" viewBox="0 0 12 9"><path d="M6 0.500 L11.500 8 Q6 9 0.500 8 Z" fill="#9e9e9e"/></svg>
<div style="left:1899.5px;top:291px;width:11.3px;height:1710px;background:#9e9e9e;border-radius:5.6px;"></div>
<svg style="left:1899px;top:2019.5px;" width="12" height="9" viewBox="0 0 12 9"><path d="M6 8.500 L11.500 1 Q6 0 0.500 1 Z" fill="#9e9e9e"/></svg>
<div style="left:130px;top:2031px;width:180px;height:31px;background:#fff;"></div>
<div style="left:0px;top:2031px;width:141px;height:31px;background:#0a0a0a;border-top-right-radius:6px;"></div>
<div style="left:296px;top:2031px;width:1622px;height:31px;background:#0a0a0a;border-top-left-radius:6px;"></div>
<svg style="left:31px;top:2043px;" width="10" height="14" viewBox="0 0 10 14"><path d="M8 1.500 L2 7 L8 12.500" fill="none" stroke="#8a8a8a" stroke-width="1.4" stroke-linecap="round" stroke-linejoin="round"/></svg>
<svg style="left:72px;top:2043px;" width="10" height="14" viewBox="0 0 10 14"><path d="M2 1.500 L8 7 L2 12.500" fill="none" stroke="#cfcfcf" stroke-width="1.4" stroke-linecap="round" stroke-linejoin="round"/></svg>
<span style="left:152.00px;top:2036.62px;line-height:23px;font-size:18.4px;color:#1c1c1c;letter-spacing:-0.308px;-webkit-text-stroke:0.5px #1c1c1c;">Sommaire_impôt</span>
<div style="left:151px;top:2060.4px;width:135px;height:1.6px;background:#1e7b46;"></div>
<span style="left:320.00px;top:2039.59px;line-height:24px;font-size:18.5px;color:#ffffff;letter-spacing:-0.472px;">Kilométrage</span>
<span style="left:447.50px;top:2039.59px;line-height:24px;font-size:18.5px;color:#ffffff;letter-spacing:-0.841px;">Frais Medicaux</span>
<span style="left:596.00px;top:2039.59px;line-height:24px;font-size:18.5px;color:#ffffff;letter-spacing:-1.175px;">Essence_Entretien</span>
<span style="left:767.00px;top:2039.59px;line-height:24px;font-size:18.5px;color:#ffffff;letter-spacing:-0.608px;">Fournitures</span>
<span style="left:891.00px;top:2039.59px;line-height:24px;font-size:18.5px;color:#ffffff;letter-spacing:-0.691px;">Représentation</span>
<span style="left:1041.50px;top:2039.59px;line-height:24px;font-size:18.5px;color:#ffffff;letter-spacing:-0.727px;">Téléphonie</span>
<div style="left:301.5px;top:2039px;width:1.2px;height:23px;background:#5a5a5a;"></div>
<div style="left:429px;top:2039px;width:1.2px;height:23px;background:#5a5a5a;"></div>
<div style="left:577.5px;top:2039px;width:1.2px;height:23px;background:#5a5a5a;"></div>
<div style="left:749px;top:2039px;width:1.2px;height:23px;background:#5a5a5a;"></div>
<div style="left:871px;top:2039px;width:1.2px;height:23px;background:#5a5a5a;"></div>
<div style="left:1023px;top:2039px;width:1.2px;height:23px;background:#5a5a5a;"></div>
<div style="left:1142px;top:2039px;width:1.2px;height:23px;background:#5a5a5a;"></div>
<span style="left:1162.00px;top:2039.59px;line-height:24px;font-size:18.5px;color:#ffffff;letter-spacing:-0.691px;width:121px;overflow:hidden;">Cotisations_Formation</span>
<div style="left:1294px;top:2048.5px;width:3.6px;height:3.6px;background:#e0e0e0;border-radius:1.8px;"></div>
<div style="left:1299.3px;top:2048.5px;width:3.6px;height:3.6px;background:#e0e0e0;border-radius:1.8px;"></div>
<div style="left:1304.6px;top:2048.5px;width:3.6px;height:3.6px;background:#e0e0e0;border-radius:1.8px;"></div>
<div style="left:1334px;top:2049.3px;width:14px;height:1.5px;background:#f0f0f0;"></div>
<div style="left:1340.25px;top:2043px;width:1.5px;height:14px;background:#f0f0f0;"></div>
<div style="left:1380.7px;top:2044px;width:2.8px;height:2.8px;background:#e6e6e6;"></div>
<div style="left:1380.7px;top:2049.5px;width:2.8px;height:2.8px;background:#e6e6e6;"></div>
<div style="left:1380.7px;top:2055px;width:2.8px;height:2.8px;background:#e6e6e6;"></div>
<div style="left:1402px;top:2039px;width:493px;height:26px;background:#191919;border-radius:13px;"></div>
<svg style="left:1408px;top:2044px;" width="10" height="13" viewBox="0 0 10 13"><path d="M0.500 6.500 L9 0.500 Q10 6.500 9 12.500 Z" fill="#9e9e9e"/></svg>
<div style="left:1423px;top:2044.5px;width:444.5px;height:12px;background:#9e9e9e;border-radius:6px;"></div>
<svg style="left:1880.5px;top:2044px;" width="10" height="13" viewBox="0 0 10 13"><path d="M9.500 6.500 L1 0.500 Q0 6.500 1 12.500 Z" fill="#9e9e9e"/></svg>
<svg style="left:20px;top:20px;" width="20" height="20" viewBox="0 0 20 20"><rect x="5" y="0" width="15" height="20" rx="2" fill="#1d6f42"/><rect x="5" y="0" width="7.5" height="5.5" fill="#3fa564"/><rect x="12.5" y="0" width="7.5" height="5.5" rx="1.5" fill="#a6dd8b"/><rect x="5" y="5.5" width="7.5" height="5" fill="#2a8c52"/><rect x="12.5" y="5.5" width="7.5" height="5" fill="#57bd74"/><rect x="12.5" y="10.5" width="7.5" height="5" fill="#21804a"/><rect x="0" y="5" width="11" height="11" rx="1.5" fill="#14713e"/><path d="M3.2 7.8 L7.8 13.4 M7.8 7.8 L3.2 13.4" stroke="#fff" stroke-width="1.7" fill="none"/></svg>
<span style="left:61.00px;top:22.29px;line-height:17px;font-size:13.6px;color:#ffffff;letter-spacing:-0.251px;">Enregistrement automatique</span>
<div style="left:235px;top:17px;width:54px;height:25px;background:#2a2a2a;border-radius:13px;border:1.3px solid #fff;box-sizing:border-box;"></div>
<div style="left:239.5px;top:21px;width:17px;height:17px;background:#fff;border-radius:8.5px;"></div>
<svg style="left:303px;top:19px;" width="22" height="22" viewBox="0 0 22 22"><path d="M2 3.5 Q2 2 3.5 2 H16.5 L20 5.5 V18.5 Q20 20 18.5 20 H3.5 Q2 20 2 18.5 Z M6 2 V8 H15 V2 M6 20 V13 H16 V20" fill="none" stroke="#fff" stroke-width="1.5" stroke-linejoin="round"/></svg>
<svg style="left:339px;top:19px;" width="20" height="22" viewBox="0 0 20 22"><path d="M2 3 V9.5 H8.5 M2.5 9 C5 4.5 11 3.5 14.5 6.5 C18.5 10 16.5 14.5 9 20" fill="none" stroke="#5e5e5e" stroke-width="1.5" stroke-linecap="round" stroke-linejoin="round"/></svg>
<svg style="left:366.5px;top:27.5px;" width="8" height="5" viewBox="0 0 8 5"><path d="M1 1 L4 4 L7 1" fill="none" stroke="#5e5e5e" stroke-width="1.2" stroke-linecap="round" stroke-linejoin="round"/></svg>
<svg style="left:387px;top:19px;" width="20" height="22" viewBox="0 0 20 22"><path d="M18 3 V9.5 H11.5 M17.5 9 C15 4.5 9 3.5 5.5 6.5 C1.5 10 3.5 14.5 11 20" fill="none" stroke="#5e5e5e" stroke-width="1.5" stroke-linecap="round" stroke-linejoin="round"/></svg>
<svg style="left:414.5px;top:27.5px;" width="8" height="5" viewBox="0 0 8 5"><path d="M1 1 L4 4 L7 1" fill="none" stroke="#5e5e5e" stroke-width="1.2" stroke-linecap="round" stroke-linejoin="round"/></svg>
<svg style="left:439px;top:25px;" width="11" height="11" viewBox="0 0 11 11"><path d="M1 1.5 H10 M2 5 L5.5 8.5 L9 5" fill="none" stroke="#fff" stroke-width="1.3" stroke-linecap="round" stroke-linejoin="round"/></svg>
<span style="left:480.00px;top:20.70px;line-height:20px;font-size:15.3px;color:#ffffff;letter-spacing:-0.311px;">Impôts-et-dépenses-2022 2025-04-30_v2.xls</span>
<span style="left:781.00px;top:20.70px;line-height:20px;font-size:15.3px;color:#ffffff;">-</span>
<span style="left:794.00px;top:20.70px;line-height:20px;font-size:15.3px;color:#ffffff;letter-spacing:0.005px;">Mode de compatib...</span>
<span style="left:940.00px;top:20.70px;line-height:20px;font-size:15.3px;color:#ffffff;">•</span>
<span style="left:953.50px;top:20.70px;line-height:20px;font-size:15.3px;color:#ffffff;letter-spacing:-0.627px;">Enregistré dans ce PC</span>
<div style="left:1153px;top:10px;width:459.5px;height:40px;background:#1f1f1f;border-radius:5px;border:1px solid #5e5e5e;box-sizing:border-box;"></div>
<svg style="left:1170px;top:20px;" width="19" height="19" viewBox="0 0 19 19"><circle cx="11.5" cy="7.5" r="5.7" fill="none" stroke="#b0b0b0" stroke-width="1.4"/><path d="M7.5 11.5 L1.5 17.5" stroke="#b0b0b0" stroke-width="1.4" stroke-linecap="round"/></svg>
<span style="left:1205.00px;top:19.46px;line-height:20px;font-size:16px;color:#a6a6a6;letter-spacing:0.2px;">Rechercher</span>
<div style="left:1693px;top:15px;width:30px;height:30px;background:#0f78d4;border-radius:15px;"></div>
<span style="left:1701.41px;top:24.23px;line-height:13px;font-size:10.3px;color:#fff;">FB</span>
<div style="left:1762px;top:29px;width:13px;height:1.4px;background:#fff;"></div>
<div style="left:1822px;top:24px;width:12.5px;height:12.5px;border-radius:2.5px;border:1.4px solid #fff;box-sizing:border-box;"></div>
<svg style="left:1881px;top:23px;" width="15" height="15" viewBox="0 0 15 15"><path d="M1.5 1.5 L13.5 13.5 M13.5 1.5 L1.5 13.5" stroke="#fff" stroke-width="1.4" stroke-linecap="round"/></svg>
<svg style="left:1099.2px;top:26.75px;" width="13" height="7.5" viewBox="0 0 13 7.5"><path d="M1 1 L6.5 6.5 L12 1" fill="none" stroke="#fff" stroke-width="1.4" stroke-linecap="round" stroke-linejoin="round"/></svg>
<span style="left:14.00px;top:70.46px;line-height:20px;font-size:16px;color:#ffffff;letter-spacing:0.081px;">Fichier</span>
<span style="left:84.00px;top:70.46px;line-height:20px;font-size:16px;color:#ffffff;font-weight:700;letter-spacing:-0.487px;">Accueil</span>
<span style="left:162.00px;top:70.46px;line-height:20px;font-size:16px;color:#ffffff;letter-spacing:0.641px;">Insertion</span>
<span style="left:253.00px;top:70.46px;line-height:20px;font-size:16px;color:#ffffff;letter-spacing:-0.081px;">Dessin</span>
<span style="left:327.00px;top:70.46px;line-height:20px;font-size:16px;color:#ffffff;letter-spacing:0.54px;">Mise en page</span>
<span style="left:454.00px;top:70.46px;line-height:20px;font-size:16px;color:#ffffff;letter-spacing:0.33px;">Formules</span>
<span style="left:547.00px;top:70.46px;line-height:20px;font-size:16px;color:#ffffff;letter-spacing:0.492px;">Données</span>
<span style="left:640.00px;top:70.46px;line-height:20px;font-size:16px;color:#ffffff;letter-spacing:-0.123px;">Révision</span>
<span style="left:727.00px;top:70.46px;line-height:20px;font-size:16px;color:#ffffff;letter-spacing:0.572px;">Affichage</span>
<span style="left:823.00px;top:70.46px;line-height:20px;font-size:16px;color:#ffffff;letter-spacing:0.762px;">Automatiser</span>
<span style="left:940.00px;top:70.46px;line-height:20px;font-size:16px;color:#ffffff;letter-spacing:0.49px;">Aide</span>
<span style="left:998.00px;top:70.46px;line-height:20px;font-size:16px;color:#ffffff;letter-spacing:0.81px;">Acrobat</span>
<div style="left:84px;top:91.5px;width:56px;height:3px;background:#4cc38a;border-radius:1.5px;"></div>
<div style="left:1636px;top:64px;width:146px;height:30px;background:#1f1f1f;border-radius:4px;border:1px solid #6e6e6e;box-sizing:border-box;"></div>
<svg style="left:1643px;top:72px;" width="15" height="14" viewBox="0 0 15 14"><path d="M1.5 1.5 H13 V9.5 H5.5 L2.5 12.5 V9.5 H1.5 Z" fill="none" stroke="#fff" stroke-width="1.3" stroke-linejoin="round"/></svg>
<span style="left:1662.00px;top:69.46px;line-height:20px;font-size:16px;color:#fff;letter-spacing:0.634px;">Commentaires</span>
<div style="left:1792px;top:64px;width:111px;height:30px;background:#33a867;border-radius:4px;"></div>
<svg style="left:1797px;top:71px;" width="16" height="16" viewBox="0 0 16 16"><path d="M9 3.5 H3.5 Q2 3.5 2 5 V13 Q2 14.5 3.5 14.5 H11.5 Q13 14.5 13 13 V11 M10 1.5 L14.5 5.5 L10 9.5 V7 C7.5 7 6 8 5 10.5 C5 6.5 7 4.2 10 4 Z" fill="none" stroke="#0a0a0a" stroke-width="1.3" stroke-linejoin="round"/></svg>
<span style="left:1818.50px;top:69.46px;line-height:20px;font-size:16px;color:#0a0a0a;letter-spacing:0.232px;">Partager</span>
<svg style="left:1890px;top:77px;" width="8" height="5" viewBox="0 0 8 5"><path d="M1 1 L4 4 L7 1" fill="none" stroke="#0a0a0a" stroke-width="1.3" stroke-linecap="round" stroke-linejoin="round"/></svg>
<div style="left:10px;top:98px;width:1898px;height:124px;background:#292929;border-radius:9px;"></div>
<div style="left:148px;top:104px;width:1.2px;height:111px;background:#505050;"></div>
<div style="left:348.5px;top:104px;width:1.2px;height:111px;background:#505050;"></div>
<div style="left:524px;top:104px;width:1.2px;height:111px;background:#505050;"></div>
<div style="left:657px;top:104px;width:1.2px;height:111px;background:#505050;"></div>
<div style="left:928.5px;top:104px;width:1.2px;height:111px;background:#505050;"></div>
<div style="left:1089.5px;top:104px;width:1.2px;height:111px;background:#505050;"></div>
<div style="left:1221.5px;top:104px;width:1.2px;height:111px;background:#505050;"></div>
<div style="left:1340px;top:104px;width:1.2px;height:111px;background:#505050;"></div>
<div style="left:1415px;top:104px;width:1.2px;height:111px;background:#505050;"></div>
<div style="left:1688px;top:104px;width:1.2px;height:111px;background:#505050;"></div>
<div style="left:1790px;top:104px;width:1.2px;height:111px;background:#505050;"></div>
<span style="left:27.00px;top:202.00px;line-height:17px;font-size:13px;color:#f0f0f0;letter-spacing:-0.034px;">Presse-papiers</span>
<svg style="left:134px;top:204.5px;" width="11" height="11" viewBox="0 0 11 11"><path d="M1 4.5 V1 H4.5 M10 2 V10 H2 M4 4 L8.5 8.5 M8.5 5 V8.5 H5" fill="none" stroke="#d0d0d0" stroke-width="1.1"/></svg>
<span style="left:221.00px;top:202.00px;line-height:17px;font-size:13px;color:#f0f0f0;letter-spacing:-0.284px;">Police</span>
<svg style="left:334px;top:204.5px;" width="11" height="11" viewBox="0 0 11 11"><path d="M1 4.5 V1 H4.5 M10 2 V10 H2 M4 4 L8.5 8.5 M8.5 5 V8.5 H5" fill="none" stroke="#d0d0d0" stroke-width="1.1"/></svg>
<span style="left:393.00px;top:202.00px;line-height:17px;font-size:13px;color:#f0f0f0;letter-spacing:-0.005px;">Alignement</span>
<svg style="left:510px;top:204.5px;" width="11" height="11" viewBox="0 0 11 11"><path d="M1 4.5 V1 H4.5 M10 2 V10 H2 M4 4 L8.5 8.5 M8.5 5 V8.5 H5" fill="none" stroke="#d0d0d0" stroke-width="1.1"/></svg>
<span style="left:556.00px;top:202.00px;line-height:17px;font-size:13px;color:#f0f0f0;letter-spacing:0.55px;">Nombre</span>
<svg style="left:643px;top:204.5px;" width="11" height="11" viewBox="0 0 11 11"><path d="M1 4.5 V1 H4.5 M10 2 V10 H2 M4 4 L8.5 8.5 M8.5 5 V8.5 H5" fill="none" stroke="#d0d0d0" stroke-width="1.1"/></svg>
<span style="left:776.00px;top:202.00px;line-height:17px;font-size:13px;color:#f0f0f0;letter-spacing:-0.481px;">Styles</span>
<span style="left:987.00px;top:202.00px;line-height:17px;font-size:13px;color:#f0f0f0;letter-spacing:-0.321px;">Cellules</span>
<span style="left:1136.50px;top:202.00px;line-height:17px;font-size:13px;color:#f0f0f0;letter-spacing:-0.125px;">Édition</span>
<span style="left:1241.00px;top:202.00px;line-height:17px;font-size:13px;color:#f0f0f0;letter-spacing:-0.02px;">Compléments</span>
<span style="left:1507.00px;top:202.00px;line-height:17px;font-size:13px;color:#f0f0f0;letter-spacing:0.309px;">Adobe Acrobat</span>
<span style="left:1692.50px;top:202.00px;line-height:17px;font-size:13px;color:#f0f0f0;letter-spacing:0.279px;">gptforwork.com</span>
<svg style="left:35px;top:107px;" width="38" height="40" viewBox="0 0 38 40"><path d="M18 35 H3.75 V8 H8 M23 8 H27 V15.5" fill="none" stroke="#ef9f2c" stroke-width="3.4"/><path d="M18 36.2 H2.6 V6.800" fill="none" stroke="#f6cd7e" stroke-width="1"/><path d="M8 11 V7.5 H12 C12 4 13.500 2 15.500 2 C17.500 2 19 4 19 7.5 H23 V11 Z" fill="#292929" stroke="#a2a2a2" stroke-width="1.9" stroke-linejoin="round"/><rect x="19" y="17" width="16.2" height="21" fill="#292929" stroke="#d2d2d2" stroke-width="1.9"/></svg>
<span style="left:31.00px;top:151.00px;line-height:20px;font-size:15.3px;color:#ffffff;letter-spacing:-0.251px;">Coller</span>
<svg style="left:46.5px;top:176.5px;" width="8" height="5" viewBox="0 0 8 5"><path d="M1 1 L4 4 L7 1" fill="none" stroke="#e0e0e0" stroke-width="1.3" stroke-linecap="round" stroke-linejoin="round"/></svg>
<svg style="left:85px;top:106px;" width="18" height="22" viewBox="0 0 18 22"><path d="M5.5 1 L11.5 15 M12.5 1 L6.5 15" stroke="#e0e0e0" stroke-width="1.3" fill="none"/><circle cx="5" cy="17.5" r="2.3" fill="none" stroke="#3a96dd" stroke-width="1.3"/><circle cx="13" cy="17.5" r="2.3" fill="none" stroke="#3a96dd" stroke-width="1.3"/></svg>
<svg style="left:83px;top:138px;" width="22" height="22" viewBox="0 0 22 22"><path d="M6 14 H2 V1.5 H9.5 V4" fill="none" stroke="#e0e0e0" stroke-width="1.3"/><path d="M7.5 5 H15 L20 10 V20.5 H7.5 Z M15 5 V10 H20 M11 13.5 H17 M11 17 H17" fill="none" stroke="#e0e0e0" stroke-width="1.3"/></svg>
<svg style="left:119px;top:147px;" width="8" height="5" viewBox="0 0 8 5"><path d="M1 1 L4 4 L7 1" fill="none" stroke="#e0e0e0" stroke-width="1.3" stroke-linecap="round" stroke-linejoin="round"/></svg>
<svg style="left:83px;top:170px;" width="22" height="22" viewBox="0 0 22 22"><path d="M16.7 1 L20.7 4 L16.7 9.2 L12.7 6.200 Z" fill="none" stroke="#cfcfcf" stroke-width="1.3" stroke-linejoin="round"/><path d="M10.8 4.3 L18.6 11 L16.3 13.800 L8.5 7 Z" fill="none" stroke="#cfcfcf" stroke-width="1.3" stroke-linejoin="round"/><path d="M8.5 7 L16.3 13.800 L9.7 19.800 L1.3 9.800 Z" fill="none" stroke="#f3c877" stroke-width="1.3" stroke-linejoin="round"/><path d="M5.5 14.800 C8 15.800 11 16.200 13.500 16.300 L9.7 19.800 Z" fill="#e8951c"/></svg>
<div style="left:159px;top:102px;width:114.5px;height:29.5px;background:#292929;border-radius:5px;border:1px solid #5c5c5c;box-sizing:border-box;"></div>
<span style="left:162.50px;top:108.30px;line-height:19px;font-size:15px;color:#ffffff;letter-spacing:-0.316px;">Cantarell</span>
<svg style="left:261.5px;top:114.75px;" width="9" height="5.5" viewBox="0 0 9 5.5"><path d="M1 1 L4.5 4.5 L8 1" fill="none" stroke="#e0e0e0" stroke-width="1.3" stroke-linecap="round" stroke-linejoin="round"/></svg>
<div style="left:276px;top:102px;width:63px;height:29.5px;background:#292929;border-radius:5px;border:1px solid #5c5c5c;box-sizing:border-box;"></div>
<span style="left:280.00px;top:108.30px;line-height:19px;font-size:15px;color:#ffffff;letter-spacing:-1.688px;">12</span>
<svg style="left:326.5px;top:114.75px;" width="9" height="5.5" viewBox="0 0 9 5.5"><path d="M1 1 L4.5 4.5 L8 1" fill="none" stroke="#e0e0e0" stroke-width="1.3" stroke-linecap="round" stroke-linejoin="round"/></svg>
<span style="left:167.38px;top:138.11px;line-height:22px;font-size:17px;color:#e6e6e6;font-weight:700;">G</span>
<span style="left:202.50px;top:137.42px;line-height:23px;font-size:18px;color:#e6e6e6;font-family:'Liberation Serif', serif;font-style:italic;">I</span>
<span style="left:232.16px;top:137.96px;line-height:20px;font-size:16px;color:#dcdcdc;">S</span>
<div style="left:232.5px;top:156.5px;width:10.5px;height:1.3px;background:#e6e6e6;"></div>
<svg style="left:257.5px;top:147px;" width="8" height="5" viewBox="0 0 8 5"><path d="M1 1 L4 4 L7 1" fill="none" stroke="#e0e0e0" stroke-width="1.3" stroke-linecap="round" stroke-linejoin="round"/></svg>
<div style="left:274px;top:134px;width:1.2px;height:30px;background:#505050;"></div>
<span style="left:282.83px;top:134.55px;line-height:27px;font-size:21.5px;color:#dcdcdc;">A</span>
<svg style="left:296px;top:139px;" width="8" height="6" viewBox="0 0 8 6"><path d="M1 4.5 L4 1.5 L7 4.5" fill="none" stroke="#3a96dd" stroke-width="1.3"/></svg>
<span style="left:316.66px;top:138.44px;line-height:22px;font-size:17.5px;color:#dcdcdc;">A</span>
<svg style="left:327px;top:139px;" width="8" height="6" viewBox="0 0 8 6"><path d="M1 1.5 L4 4.5 L7 1.5" fill="none" stroke="#3a96dd" stroke-width="1.3"/></svg>
<svg style="left:163px;top:170px;" width="21" height="21" viewBox="0 0 21 21"><path d="M1.5 1.5 H19.5 M1.5 1.5 V19 M19.5 1.5 V19 M10.5 1.5 V19 M1.5 10 H19.5" fill="none" stroke="#d0d0d0" stroke-width="1.1" stroke-dasharray="1.6 1.6"/><path d="M1 19.5 H20" stroke="#e6e6e6" stroke-width="1.6"/></svg>
<svg style="left:193.5px;top:179px;" width="8" height="5" viewBox="0 0 8 5"><path d="M1 1 L4 4 L7 1" fill="none" stroke="#e0e0e0" stroke-width="1.3" stroke-linecap="round" stroke-linejoin="round"/></svg>
<div style="left:210px;top:166px;width:1.2px;height:30px;background:#505050;"></div>
<svg style="left:218px;top:169px;" width="21" height="17" viewBox="0 0 21 17"><path d="M8 2 L15.5 9.500 L9.5 15 L3.5 9 Z M8 2 V0.5" fill="none" stroke="#e6e6e6" stroke-width="1.3" stroke-linejoin="round"/><path d="M15.5 7 Q18.5 10 16.5 13" fill="none" stroke="#3a96dd" stroke-width="1.4"/></svg>
<div style="left:218px;top:186px;width:20px;height:5px;background:#fff100;"></div>
<svg style="left:247.5px;top:179px;" width="8" height="5" viewBox="0 0 8 5"><path d="M1 1 L4 4 L7 1" fill="none" stroke="#e0e0e0" stroke-width="1.3" stroke-linecap="round" stroke-linejoin="round"/></svg>
<span style="left:272.66px;top:165.92px;line-height:24px;font-size:19px;color:#e6e6e6;">A</span>
<div style="left:269px;top:186px;width:20px;height:5px;background:#f00;"></div>
<svg style="left:298.5px;top:179px;" width="8" height="5" viewBox="0 0 8 5"><path d="M1 1 L4 4 L7 1" fill="none" stroke="#e0e0e0" stroke-width="1.3" stroke-linecap="round" stroke-linejoin="round"/></svg>
<svg style="left:365px;top:106px;" width="19" height="20" viewBox="0 0 19 20"><path d="M0 1.5 H18 M2.5 6.5 H15.5 M0 11.5 H18 " stroke="#e8e8e8" stroke-width="1.3" fill="none"/></svg>
<svg style="left:397px;top:106px;" width="19" height="20" viewBox="0 0 19 20"><path d="M0 6 H18 M2.5 11 H15.5 M0 16 H18 " stroke="#e8e8e8" stroke-width="1.3" fill="none"/></svg>
<div style="left:423px;top:102px;width:30px;height:30px;background:#383838;border-radius:5px;border:1px solid #8a8a8a;box-sizing:border-box;"></div>
<svg style="left:429px;top:106px;" width="19" height="20" viewBox="0 0 19 20"><path d="M0 9.5 H18 M2.5 14.5 H15.5 M0 19.3 H18 " stroke="#e8e8e8" stroke-width="1.3" fill="none"/></svg>
<span style="left:463.55px;top:104.67px;line-height:16px;font-size:12.5px;color:#e6e6e6;">ab</span>
<span style="left:462.88px;top:113.17px;line-height:16px;font-size:12.5px;color:#e6e6e6;">c</span>
<svg style="left:469px;top:115px;" width="12" height="11" viewBox="0 0 12 11"><path d="M10.5 1 V5.500 H2.5 M5.5 2.500 L2.5 5.500 L5.500 8.500" fill="none" stroke="#3a96dd" stroke-width="1.3"/></svg>
<svg style="left:365px;top:138px;" width="19" height="20" viewBox="0 0 19 20"><path d="M0 3 H18 M0 7.7 H11 M0 12.4 H18 M0 17.1 H11 " stroke="#e8e8e8" stroke-width="1.3" fill="none"/></svg>
<svg style="left:397px;top:138px;" width="19" height="20" viewBox="0 0 19 20"><path d="M0 3 H18 M3.5 7.7 H14.5 M0 12.4 H18 M3.5 17.1 H14.5 " stroke="#e8e8e8" stroke-width="1.3" fill="none"/></svg>
<svg style="left:429px;top:138px;" width="19" height="20" viewBox="0 0 19 20"><path d="M0 3 H18 M7 7.7 H18 M0 12.4 H18 M7 17.1 H18 " stroke="#e8e8e8" stroke-width="1.3" fill="none"/></svg>
<svg style="left:459px;top:138px;" width="22" height="21" viewBox="0 0 22 21"><path d="M1.500 1.500 H20 V19.500 H1.500 Z M10.700 1.500 V5.500 M10.700 15.500 V19.500" fill="none" stroke="#c4c4c4" stroke-width="1.2"/><path d="M1.500 5.500 H20 V15.500 H1.500 Z" fill="none" stroke="#3a96dd" stroke-width="1.4"/><path d="M4.500 10.500 H17 M7.200 7.800 L4.500 10.500 L7.200 13.200 M14.300 7.800 L17 10.500 L14.300 13.200" fill="none" stroke="#3a96dd" stroke-width="1.4"/></svg>
<svg style="left:495.5px;top:147px;" width="8" height="5" viewBox="0 0 8 5"><path d="M1 1 L4 4 L7 1" fill="none" stroke="#e0e0e0" stroke-width="1.3" stroke-linecap="round" stroke-linejoin="round"/></svg>
<svg style="left:365px;top:170px;" width="19" height="20" viewBox="0 0 19 20"><path d="M0 2.5 H18 M9 7.3 H18 M9 12 H18 M0 16.8 H18 " stroke="#e8e8e8" stroke-width="1.3" fill="none"/></svg>
<svg style="left:365px;top:175px;" width="9" height="10" viewBox="0 0 9 10"><path d="M7.500 4.800 H0.800 M3.800 1.800 L0.800 4.800 L3.800 7.800" fill="none" stroke="#3a96dd" stroke-width="1.3"/></svg>
<svg style="left:397px;top:170px;" width="19" height="20" viewBox="0 0 19 20"><path d="M0 2.5 H18 M9 7.3 H18 M9 12 H18 M0 16.8 H18 " stroke="#e8e8e8" stroke-width="1.3" fill="none"/></svg>
<svg style="left:397px;top:175px;" width="9" height="10" viewBox="0 0 9 10"><path d="M0.500 4.800 H7.200 M4.200 1.800 L7.200 4.800 L4.200 7.800" fill="none" stroke="#3a96dd" stroke-width="1.3"/></svg>
<div style="left:423px;top:166px;width:1.2px;height:30px;background:#505050;"></div>
<span style="left:437.00px;top:171.67px;line-height:16px;font-size:12.5px;color:#e6e6e6;transform:rotate(-45deg);transform-origin:0 100%;">ab</span>
<svg style="left:437px;top:174px;" width="16" height="17" viewBox="0 0 16 17"><path d="M1 15.500 L13.500 2.500 M7.500 2.500 H13.800 V8.800" fill="none" stroke="#3a96dd" stroke-width="1.4"/></svg>
<svg style="left:458.5px;top:179px;" width="8" height="5" viewBox="0 0 8 5"><path d="M1 1 L4 4 L7 1" fill="none" stroke="#e0e0e0" stroke-width="1.3" stroke-linecap="round" stroke-linejoin="round"/></svg>
<div style="left:535px;top:102px;width:113px;height:29.5px;background:#292929;border-radius:5px;border:1px solid #5c5c5c;box-sizing:border-box;"></div>
<span style="left:538.50px;top:108.30px;line-height:19px;font-size:15px;color:#ffffff;letter-spacing:0.1px;">Monétaire</span>
<svg style="left:635.5px;top:114.75px;" width="9" height="5.5" viewBox="0 0 9 5.5"><path d="M1 1 L4.5 4.5 L8 1" fill="none" stroke="#e0e0e0" stroke-width="1.3" stroke-linecap="round" stroke-linejoin="round"/></svg>
<span style="left:542.74px;top:134.20px;line-height:29px;font-size:22.5px;color:#e6e6e6;">$</span>
<svg style="left:569px;top:147px;" width="8" height="5" viewBox="0 0 8 5"><path d="M1 1 L4 4 L7 1" fill="none" stroke="#e0e0e0" stroke-width="1.3" stroke-linecap="round" stroke-linejoin="round"/></svg>
<span style="left:591.22px;top:135.18px;line-height:28px;font-size:22px;color:#e6e6e6;">%</span>
<span style="left:622.50px;top:142.19px;line-height:14px;font-size:11px;color:#bdbdbd;letter-spacing:0.82px;">000</span>
<svg style="left:539px;top:170px;" width="22" height="21" viewBox="0 0 22 21"><path d="M1 5 H9.5 M4 2 L1 5 L4 8" fill="none" stroke="#3a96dd" stroke-width="1.3"/></svg>
<span style="left:554.08px;top:169.36px;line-height:14px;font-size:10.5px;color:#e0e0e0;">0</span>
<span style="left:544.20px;top:179.86px;line-height:14px;font-size:10.5px;color:#e0e0e0;">.00</span>
<svg style="left:571px;top:170px;" width="22" height="21" viewBox="0 0 22 21"><path d="M1 15.500 H9.5 M6.500 12.500 L9.500 15.500 L6.500 18.500" fill="none" stroke="#3a96dd" stroke-width="1.3"/></svg>
<span style="left:576.20px;top:169.36px;line-height:14px;font-size:10.5px;color:#e0e0e0;">.00</span>
<span style="left:583.62px;top:179.86px;line-height:14px;font-size:10.5px;color:#e0e0e0;">.0</span>
<svg style="left:672.5px;top:108px;" width="21" height="19" viewBox="0 0 21 19"><path d="M1 1 H19.500 V17.500 H1 Z M1 5.100 H19.500 M1 9.200 H19.500 M1 13.300 H19.500 M7.200 1 V17.500 M13.400 1 V17.500" fill="none" stroke="#a8a8a8" stroke-width="1.1"/></svg>
<div style="left:678.5px;top:109px;width:6.5px;height:4px;background:#e8423f;"></div>
<div style="left:680px;top:113.5px;width:6px;height:4px;background:#3a96dd;"></div>
<div style="left:678.5px;top:118px;width:13px;height:4.5px;background:#e8423f;"></div>
<svg style="left:672.5px;top:140px;" width="21" height="19" viewBox="0 0 21 19"><path d="M1 1 H19.500 V17.500 H1 Z M1 5.100 H19.500 M1 9.200 H19.500 M1 13.300 H19.500 M7.200 1 V17.500 M13.400 1 V17.500" fill="none" stroke="#a8a8a8" stroke-width="1.1"/></svg>
<svg style="left:676px;top:142px;" width="18" height="18" viewBox="0 0 18 18"><path d="M4 5 H16 V12 L9 16 H4 Z" fill="#3a96dd"/><path d="M15.500 2 L17 3.500 L8 13.500 L5.500 14.500 L6.500 12 Z" fill="#292929" stroke="#e6e6e6" stroke-width="1.1"/><path d="M2 17 C2 14 4 13 6 14.500 C6 17 4 17.500 2 17 Z" fill="#9cc9f0"/></svg>
<svg style="left:672.5px;top:172px;" width="21" height="19" viewBox="0 0 21 19"><path d="M1 1 H19.500 V17.500 H1 Z M1 5.100 H19.500 M1 9.200 H19.500 M1 13.300 H19.500 M7.200 1 V17.500 M13.400 1 V17.500" fill="none" stroke="#a8a8a8" stroke-width="1.1"/></svg>
<svg style="left:676px;top:174px;" width="18" height="18" viewBox="0 0 18 18"><path d="M2 3 H16 V11 L9 16 H2 Z" fill="#3a96dd"/><path d="M15.500 2 L17 3.500 L8 13.500 L5.500 14.500 L6.500 12 Z" fill="#292929" stroke="#e6e6e6" stroke-width="1.1"/><path d="M2 17 C2 14 4 13 6 14.500 C6 17 4 17.500 2 17 Z" fill="#9cc9f0"/></svg>
<span style="left:698.00px;top:107.70px;line-height:20px;font-size:15.3px;color:#ffffff;letter-spacing:-0.027px;">Mise en forme conditionnelle</span>
<svg style="left:896.7px;top:113.5px;" width="8" height="5" viewBox="0 0 8 5"><path d="M1 1 L4 4 L7 1" fill="none" stroke="#e0e0e0" stroke-width="1.3" stroke-linecap="round" stroke-linejoin="round"/></svg>
<span style="left:698.00px;top:139.70px;line-height:20px;font-size:15.3px;color:#ffffff;letter-spacing:-0.128px;">Mettre sous forme de tableau</span>
<svg style="left:898.5px;top:145.5px;" width="8" height="5" viewBox="0 0 8 5"><path d="M1 1 L4 4 L7 1" fill="none" stroke="#e0e0e0" stroke-width="1.3" stroke-linecap="round" stroke-linejoin="round"/></svg>
<span style="left:698.00px;top:171.70px;line-height:20px;font-size:15.3px;color:#ffffff;letter-spacing:-0.364px;">Styles de cellules</span>
<svg style="left:814.5px;top:177.5px;" width="8" height="5" viewBox="0 0 8 5"><path d="M1 1 L4 4 L7 1" fill="none" stroke="#e0e0e0" stroke-width="1.3" stroke-linecap="round" stroke-linejoin="round"/></svg>
<svg style="left:944.5px;top:108px;" width="21" height="19" viewBox="0 0 21 19"><path d="M1 1 H19.500 V17.500 H1 Z M1 5.100 H19.500 M1 9.200 H19.500 M1 13.300 H19.500 M7.200 1 V17.500 M13.400 1 V17.500" fill="none" stroke="#a8a8a8" stroke-width="1.1"/></svg>
<div style="left:955px;top:112.5px;width:9.5px;height:6.5px;background:#3a96dd;"></div>
<svg style="left:944px;top:111px;" width="14" height="10" viewBox="0 0 14 10"><path d="M11 5 H2 M5.500 1.500 L2 5 L5.500 8.500" fill="none" stroke="#3a96dd" stroke-width="1.6"/></svg>
<svg style="left:944.5px;top:140px;" width="21" height="19" viewBox="0 0 21 19"><path d="M1 1 H19.500 V17.500 H1 Z M1 5.100 H19.500 M1 9.200 H19.500 M1 13.300 H19.500 M7.200 1 V17.500 M13.400 1 V17.500" fill="none" stroke="#a8a8a8" stroke-width="1.1"/></svg>
<div style="left:949.5px;top:145.5px;width:7px;height:6px;background:#3a96dd;"></div>
<svg style="left:957px;top:144px;" width="9" height="9" viewBox="0 0 9 9"><path d="M1.500 1.500 L7.500 7.500 M7.500 1.500 L1.500 7.500" stroke="#e8423f" stroke-width="1.5"/></svg>
<svg style="left:944.5px;top:174px;" width="21" height="19" viewBox="0 0 21 19"><path d="M1 1 H19.500 V17.500 H1 Z M1 5.100 H19.500 M1 9.200 H19.500 M1 13.300 H19.500 M7.200 1 V17.500 M13.400 1 V17.500" fill="none" stroke="#a8a8a8" stroke-width="1.1"/></svg>
<div style="left:950px;top:178.5px;width:10px;height:8px;background:#3a96dd;"></div>
<svg style="left:946px;top:169px;" width="19" height="6" viewBox="0 0 19 6"><path d="M1.500 3 H17.500 M1.500 0.500 V5.500 M17.500 0.500 V5.500" stroke="#3a96dd" stroke-width="1.3" fill="none"/></svg>
<span style="left:970.00px;top:107.70px;line-height:20px;font-size:15.3px;color:#ffffff;letter-spacing:-0.602px;">Insérer</span>
<svg style="left:1036.5px;top:115px;" width="8" height="5" viewBox="0 0 8 5"><path d="M1 1 L4 4 L7 1" fill="none" stroke="#e0e0e0" stroke-width="1.3" stroke-linecap="round" stroke-linejoin="round"/></svg>
<span style="left:970.00px;top:139.70px;line-height:20px;font-size:15.3px;color:#ffffff;letter-spacing:-0.195px;">Supprimer</span>
<svg style="left:1061.5px;top:147px;" width="8" height="5" viewBox="0 0 8 5"><path d="M1 1 L4 4 L7 1" fill="none" stroke="#e0e0e0" stroke-width="1.3" stroke-linecap="round" stroke-linejoin="round"/></svg>
<span style="left:970.00px;top:171.70px;line-height:20px;font-size:15.3px;color:#ffffff;letter-spacing:-0.291px;">Format</span>
<svg style="left:1021.7px;top:177.5px;" width="8" height="5" viewBox="0 0 8 5"><path d="M1 1 L4 4 L7 1" fill="none" stroke="#e0e0e0" stroke-width="1.3" stroke-linecap="round" stroke-linejoin="round"/></svg>
<svg style="left:1107px;top:107px;" width="18" height="20" viewBox="0 0 18 20"><path d="M16 4 V1.500 H2 L9.500 10 L2 18.500 H16 V16" fill="none" stroke="#e6e6e6" stroke-width="1.4" stroke-linejoin="round"/></svg>
<svg style="left:1141px;top:115px;" width="8" height="5" viewBox="0 0 8 5"><path d="M1 1 L4 4 L7 1" fill="none" stroke="#e0e0e0" stroke-width="1.3" stroke-linecap="round" stroke-linejoin="round"/></svg>
<span style="left:1168.33px;top:105.19px;line-height:14px;font-size:11px;color:#3a96dd;">A</span>
<span style="left:1168.63px;top:115.69px;line-height:14px;font-size:11px;color:#e6e6e6;">Z</span>
<svg style="left:1176px;top:111px;" width="13" height="14" viewBox="0 0 13 14"><path d="M1 1.500 H12 L8 6.500 V12 L5 10.500 V6.500 Z" fill="none" stroke="#e6e6e6" stroke-width="1.2" stroke-linejoin="round"/></svg>
<svg style="left:1195.5px;top:115px;" width="8" height="5" viewBox="0 0 8 5"><path d="M1 1 L4 4 L7 1" fill="none" stroke="#e0e0e0" stroke-width="1.3" stroke-linecap="round" stroke-linejoin="round"/></svg>
<svg style="left:1105.5px;top:139px;" width="21" height="20" viewBox="0 0 21 20"><path d="M1 1.500 H20 V18.500 H1 Z M1 5 H20" fill="none" stroke="#e0e0e0" stroke-width="1.3"/><path d="M10.500 7.500 V15 M7 12 L10.500 15.500 L14 12" fill="none" stroke="#3a96dd" stroke-width="1.5"/></svg>
<svg style="left:1133.5px;top:147px;" width="8" height="5" viewBox="0 0 8 5"><path d="M1 1 L4 4 L7 1" fill="none" stroke="#e0e0e0" stroke-width="1.3" stroke-linecap="round" stroke-linejoin="round"/></svg>
<svg style="left:1168px;top:138px;" width="21" height="21" viewBox="0 0 21 21"><circle cx="13" cy="8" r="6" fill="none" stroke="#e6e6e6" stroke-width="1.4"/><path d="M8.500 12.500 L1.500 19.500" stroke="#e6e6e6" stroke-width="1.4" stroke-linecap="round"/></svg>
<svg style="left:1195.5px;top:147px;" width="8" height="5" viewBox="0 0 8 5"><path d="M1 1 L4 4 L7 1" fill="none" stroke="#e0e0e0" stroke-width="1.3" stroke-linecap="round" stroke-linejoin="round"/></svg>
<svg style="left:1105px;top:170px;" width="22" height="21" viewBox="0 0 22 21"><path d="M11.500 2 L20 10 L9.500 19.500 L1.500 12 Z" fill="none" stroke="#c26fd2" stroke-width="1.5" stroke-linejoin="round"/><path d="M6.500 7.500 L14.500 15 L9.500 19.500 L1.500 12 Z" fill="#b44fc8"/></svg>
<svg style="left:1133.5px;top:179px;" width="8" height="5" viewBox="0 0 8 5"><path d="M1 1 L4 4 L7 1" fill="none" stroke="#e0e0e0" stroke-width="1.3" stroke-linecap="round" stroke-linejoin="round"/></svg>
<svg style="left:1263px;top:107px;" width="38" height="37" viewBox="0 0 38 37"><path d="M1.500 1.500 H36 V35.500 H1.500 Z" fill="none" stroke="#5c5c5c" stroke-width="1.6"/><path d="M5.500 5.500 H16 V16 H5.500 Z M21 5.500 H32 V16 H21 Z M5.500 21 H16 V31.500 H5.500 Z M21 21 H32 V31.500 H21 Z" fill="none" stroke="#5c5c5c" stroke-width="1.6"/></svg>
<span style="left:1236.00px;top:148.70px;line-height:20px;font-size:15.3px;color:#6a6a6a;letter-spacing:-0.188px;">Compléments</span>
<svg style="left:1358px;top:107px;" width="40" height="38" viewBox="0 0 40 38"><defs><linearGradient id="cg1" x1="0.6" y1="0" x2="0.3" y2="1"><stop offset="0" stop-color="#1677e8"/><stop offset="0.35" stop-color="#2bb5d8"/><stop offset="0.62" stop-color="#5fc98a"/><stop offset="0.82" stop-color="#c9d83a"/><stop offset="1" stop-color="#f6c52e"/></linearGradient><linearGradient id="cg2" x1="0.7" y1="0" x2="0.35" y2="1"><stop offset="0" stop-color="#8a5cf2"/><stop offset="0.4" stop-color="#d95fc0"/><stop offset="0.75" stop-color="#f2708a"/><stop offset="1" stop-color="#f77a2c"/></linearGradient></defs><path d="M26 36 H16 Q12 36 10.500 32 L9 27.500 H16 Q19 27.500 20 24.500 L23 14 Q24 10.500 27.500 10.500 H34 Q39.500 10.500 38 16 L33 31.500 Q31.500 36 26 36 Z" fill="url(#cg2)"/><path d="M14 2 H24 Q28 2 29.500 6 L31 10.500 H24 Q21 10.500 20 13.500 L17 24 Q16 27.500 12.500 27.500 H6 Q0.500 27.500 2 22 L7 6.500 Q8.500 2 14 2 Z" fill="url(#cg1)"/><path d="M24 2 Q28 2 29.500 6 L31 10.500 H26.500 Q25.500 5 21.500 2 Z" fill="#1250c4" opacity="0.75"/></svg>
<span style="left:1353.70px;top:150.70px;line-height:20px;font-size:15.3px;color:#ffffff;letter-spacing:0.279px;">Copilot</span>
<svg style="left:1373.5px;top:177px;" width="8" height="5" viewBox="0 0 8 5"><path d="M1 1 L4 4 L7 1" fill="none" stroke="#e0e0e0" stroke-width="1.3" stroke-linecap="round" stroke-linejoin="round"/></svg>
<svg style="left:1470px;top:113px;" width="27" height="29" viewBox="0 0 27 29"><path d="M13 1.500 H3.500 Q2 1.500 2 3 V21 Q2 22.500 3.500 22.500 H9" fill="none" stroke="#3b78e7" stroke-width="1.4"/><path d="M13 1.500 L18 6.500 V11" fill="none" stroke="#3b78e7" stroke-width="1.4"/><path d="M5 15.500 C8 13 10 9 9.500 6.500 C9 5.500 8 6.500 8.500 8.500 C9.500 12 12 14 14.500 14 C15.500 13 12 12.500 5 15.500 Z" fill="none" stroke="#3b78e7" stroke-width="1"/><path d="M14.500 19 L19.500 14.500 Q22 12.500 24 14.500 Q25.500 16.500 23.500 18.500 L20 21.500 M17 17.500 L13.500 20.500 Q11.500 22.500 13.500 24.500 Q15.500 26.500 17.500 24.500 L22 20.500" fill="none" stroke="#3b78e7" stroke-width="1.5"/></svg>
<svg style="left:1597px;top:113px;" width="27" height="29" viewBox="0 0 27 29"><path d="M13 1.500 H3.500 Q2 1.500 2 3 V21 Q2 22.500 3.500 22.500 H9" fill="none" stroke="#3b78e7" stroke-width="1.4"/><path d="M13 1.500 L18 6.500 V11" fill="none" stroke="#3b78e7" stroke-width="1.4"/><path d="M5 15.500 C8 13 10 9 9.500 6.500 C9 5.500 8 6.500 8.500 8.500 C9.500 12 12 14 14.500 14 C15.500 13 12 12.500 5 15.500 Z" fill="none" stroke="#3b78e7" stroke-width="1"/><path d="M12 18.500 H25 V27.500 H12 Z M12 18.500 L18.500 24 L25 18.500" fill="none" stroke="#3b78e7" stroke-width="1.4" stroke-linejoin="round"/></svg>
<span style="left:1428.70px;top:149.20px;line-height:20px;font-size:15.3px;color:#ffffff;letter-spacing:-0.648px;">Créer un PDF et</span>
<span style="left:1429.00px;top:169.20px;line-height:20px;font-size:15.3px;color:#ffffff;letter-spacing:-0.014px;">partager le lien</span>
<span style="left:1548.00px;top:149.20px;line-height:20px;font-size:15.3px;color:#ffffff;letter-spacing:-0.561px;">Créer un PDF et le</span>
<span style="left:1539.20px;top:169.20px;line-height:20px;font-size:15.3px;color:#ffffff;letter-spacing:-0.013px;">partager via Outlook</span>
<div style="left:1720px;top:106px;width:40px;height:40px;background:#303030;border-radius:6px;"></div>
<svg style="left:1720px;top:106px;" width="40" height="40" viewBox="0 0 40 40"><path d="M8 4.5 L9.2 7.8 L12.5 9 L9.2 10.2 L8 13.5 L6.8 10.2 L3.5 9 L6.8 7.8 Z" fill="#4a4a4a"/><path d="M19 4.5 L20.2 7.8 L23.5 9 L20.2 10.2 L19 13.5 L17.8 10.2 L14.5 9 L17.8 7.8 Z" fill="#4a4a4a"/><path d="M30 4.5 L31.2 7.8 L34.5 9 L31.2 10.2 L30 13.5 L28.8 10.2 L25.5 9 L28.8 7.8 Z" fill="#4a4a4a"/><path d="M13.5 14.0 L14.7 17.3 L18.0 18.5 L14.7 19.7 L13.5 23.0 L12.3 19.7 L9.0 18.5 L12.3 17.3 Z" fill="#4a4a4a"/><path d="M24.5 14.0 L25.7 17.3 L29.0 18.5 L25.7 19.7 L24.5 23.0 L23.3 19.7 L20.0 18.5 L23.3 17.3 Z" fill="#4a4a4a"/><path d="M35 14.0 L36.2 17.3 L39.5 18.5 L36.2 19.7 L35 23.0 L33.8 19.7 L30.5 18.5 L33.8 17.3 Z" fill="#4a4a4a"/><path d="M19 23.5 L20.2 26.8 L23.5 28 L20.2 29.2 L19 32.5 L17.8 29.2 L14.5 28 L17.8 26.8 Z" fill="#4a4a4a"/><path d="M30 23.5 L31.2 26.8 L34.5 28 L31.2 29.2 L30 32.5 L28.8 29.2 L25.5 28 L28.8 26.8 Z" fill="#4a4a4a"/><path d="M24.5 31.5 L25.7 34.8 L29.0 36 L25.7 37.2 L24.5 40.5 L23.3 37.2 L20.0 36 L23.3 34.8 Z" fill="#4a4a4a"/></svg>
<span style="left:1714.70px;top:149.20px;line-height:20px;font-size:15.3px;color:#6a6a6a;letter-spacing:-0.714px;">GPT for</span>
<span style="left:1703.50px;top:169.20px;line-height:20px;font-size:15.3px;color:#6a6a6a;letter-spacing:-0.515px;">Excel Word</span>
<svg style="left:1883.2px;top:201.25px;" width="13" height="7.5" viewBox="0 0 13 7.5"><path d="M1 1 L6.5 6.5 L12 1" fill="none" stroke="#e8e8e8" stroke-width="1.4" stroke-linecap="round" stroke-linejoin="round"/></svg>
<div style="left:10px;top:232px;width:126.5px;height:29.5px;background:#292929;border-radius:5px;border:1px solid #5c5c5c;box-sizing:border-box;"></div>
<span style="left:17.00px;top:236.96px;line-height:20px;font-size:15.4px;color:#ffffff;">C13</span>
<svg style="left:116px;top:243.95px;" width="13" height="7.5" viewBox="0 0 13 7.5"><path d="M1 1 L6.5 6.5 L12 1" fill="none" stroke="#e0e0e0" stroke-width="1.3" stroke-linecap="round" stroke-linejoin="round"/></svg>
<div style="left:148px;top:240px;width:2.6px;height:2.6px;background:#e6e6e6;"></div>
<div style="left:148px;top:245px;width:2.6px;height:2.6px;background:#e6e6e6;"></div>
<div style="left:148px;top:250px;width:2.6px;height:2.6px;background:#e6e6e6;"></div>
<div style="left:162px;top:232px;width:107px;height:29.5px;background:#292929;border-radius:5px;border:1px solid #5c5c5c;box-sizing:border-box;"></div>
<svg style="left:169px;top:238.5px;" width="17" height="17" viewBox="0 0 17 17"><path d="M1.5 1.5 L15.5 15.5 M15.5 1.5 L1.5 15.5" stroke="#8c8c8c" stroke-width="1.3" stroke-linecap="round"/></svg>
<svg style="left:197px;top:238.5px;" width="22" height="17" viewBox="0 0 22 17"><path d="M1.5 9 L7 15 L20.5 1.5" fill="none" stroke="#8c8c8c" stroke-width="1.3" stroke-linecap="round" stroke-linejoin="round"/></svg>
<span style="left:230.00px;top:235.09px;line-height:24px;font-size:19px;color:#f0f0f0;font-family:'Liberation Serif', serif;font-style:italic;letter-spacing:2.781px;">fx</span>
<svg style="left:253.5px;top:244px;" width="12" height="7" viewBox="0 0 12 7"><path d="M1 1 L6 6 L11 1" fill="none" stroke="#cfcfcf" stroke-width="1.2" stroke-linecap="round" stroke-linejoin="round"/></svg>
<div style="left:274px;top:232px;width:1634px;height:29.5px;background:#292929;border-radius:5px;border:1px solid #5c5c5c;box-sizing:border-box;"></div>
<span style="left:287.00px;top:237.58px;line-height:21px;font-size:16.6px;color:#ffffff;font-family:'Liberation Mono', monospace;letter-spacing:-0.016px;">=telefono</span>
<svg style="left:1889.5px;top:242.25px;" width="13" height="7.5" viewBox="0 0 13 7.5"><path d="M1 1 L6.5 6.5 L12 1" fill="none" stroke="#d8d8d8" stroke-width="1.3" stroke-linecap="round" stroke-linejoin="round"/></svg>
</div>
<div style="left:1918px;top:0px;width:2px;height:2062px;background:#6a6a6a;"></div>
<div style="left:1920px;top:0;width:1883px;height:2062px;overflow:hidden"><div style="left:-1920px;top:0;width:3803px;height:2062px">
<div style="left:1954px;top:207px;width:1849px;height:1824px;background:#fff;"></div>
<div style="left:1954px;top:231px;width:1850px;height:1px;background:#e1e1e1;"></div>
<div style="left:1954px;top:255px;width:1850px;height:1px;background:#e1e1e1;"></div>
<div style="left:1954px;top:279px;width:1850px;height:1px;background:#e1e1e1;"></div>
<div style="left:1954px;top:303px;width:1850px;height:1px;background:#e1e1e1;"></div>
<div style="left:1954px;top:327px;width:1850px;height:1px;background:#e1e1e1;"></div>
<div style="left:1954px;top:351px;width:1850px;height:1px;background:#e1e1e1;"></div>
<div style="left:1954px;top:375px;width:1850px;height:1px;background:#e1e1e1;"></div>
<div style="left:1954px;top:399px;width:1850px;height:1px;background:#e1e1e1;"></div>
<div style="left:1954px;top:423px;width:1850px;height:1px;background:#e1e1e1;"></div>
<div style="left:1954px;top:447px;width:1850px;height:1px;background:#e1e1e1;"></div>
<div style="left:1954px;top:471px;width:1850px;height:1px;background:#e1e1e1;"></div>
<div style="left:1954px;top:495px;width:1850px;height:1px;background:#e1e1e1;"></div>
<div style="left:1954px;top:519px;width:1850px;height:1px;background:#e1e1e1;"></div>
<div style="left:1954px;top:543px;width:1850px;height:1px;background:#e1e1e1;"></div>
<div style="left:1954px;top:567px;width:1850px;height:1px;background:#e1e1e1;"></div>
<div style="left:1954px;top:591px;width:1850px;height:1px;background:#e1e1e1;"></div>
<div style="left:1954px;top:615px;width:1850px;height:1px;background:#e1e1e1;"></div>
<div style="left:1954px;top:639px;width:1850px;height:1px;background:#e1e1e1;"></div>
<div style="left:1954px;top:663px;width:1850px;height:1px;background:#e1e1e1;"></div>
<div style="left:1954px;top:687px;width:1850px;height:1px;background:#e1e1e1;"></div>
<div style="left:1954px;top:711px;width:1850px;height:1px;background:#e1e1e1;"></div>
<div style="left:1954px;top:735px;width:1850px;height:1px;background:#e1e1e1;"></div>
<div style="left:1954px;top:759px;width:1850px;height:1px;background:#e1e1e1;"></div>
<div style="left:1954px;top:783px;width:1850px;height:1px;background:#e1e1e1;"></div>
<div style="left:1954px;top:807px;width:1850px;height:1px;background:#e1e1e1;"></div>
<div style="left:1954px;top:831px;width:1850px;height:1px;background:#e1e1e1;"></div>
<div style="left:1954px;top:855px;width:1850px;height:1px;background:#e1e1e1;"></div>
<div style="left:1954px;top:879px;width:1850px;height:1px;background:#e1e1e1;"></div>
<div style="left:1954px;top:903px;width:1850px;height:1px;background:#e1e1e1;"></div>
<div style="left:1954px;top:927px;width:1850px;height:1px;background:#e1e1e1;"></div>
<div style="left:1954px;top:951px;width:1850px;height:1px;background:#e1e1e1;"></div>
<div style="left:1954px;top:975px;width:1850px;height:1px;background:#e1e1e1;"></div>
<div style="left:1954px;top:999px;width:1850px;height:1px;background:#e1e1e1;"></div>
<div style="left:1954px;top:1023px;width:1850px;height:1px;background:#e1e1e1;"></div>
<div style="left:1954px;top:1047px;width:1850px;height:1px;background:#e1e1e1;"></div>
<div style="left:1954px;top:1071px;width:1850px;height:1px;background:#e1e1e1;"></div>
<div style="left:1954px;top:1095px;width:1850px;height:1px;background:#e1e1e1;"></div>
<div style="left:1954px;top:1119px;width:1850px;height:1px;background:#e1e1e1;"></div>
<div style="left:1954px;top:1143px;width:1850px;height:1px;background:#e1e1e1;"></div>
<div style="left:1954px;top:1167px;width:1850px;height:1px;background:#e1e1e1;"></div>
<div style="left:1954px;top:1191px;width:1850px;height:1px;background:#e1e1e1;"></div>
<div style="left:1954px;top:1215px;width:1850px;height:1px;background:#e1e1e1;"></div>
<div style="left:1954px;top:1239px;width:1850px;height:1px;background:#e1e1e1;"></div>
<div style="left:1954px;top:1263px;width:1850px;height:1px;background:#e1e1e1;"></div>
<div style="left:1954px;top:1287px;width:1850px;height:1px;background:#e1e1e1;"></div>
<div style="left:1954px;top:1311px;width:1850px;height:1px;background:#e1e1e1;"></div>
<div style="left:1954px;top:1335px;width:1850px;height:1px;background:#e1e1e1;"></div>
<div style="left:1954px;top:1359px;width:1850px;height:1px;background:#e1e1e1;"></div>
<div style="left:1954px;top:1383px;width:1850px;height:1px;background:#e1e1e1;"></div>
<div style="left:1954px;top:1407px;width:1850px;height:1px;background:#e1e1e1;"></div>
<div style="left:1954px;top:1431px;width:1850px;height:1px;background:#e1e1e1;"></div>
<div style="left:1954px;top:1455px;width:1850px;height:1px;background:#e1e1e1;"></div>
<div style="left:1954px;top:1479px;width:1850px;height:1px;background:#e1e1e1;"></div>
<div style="left:1954px;top:1503px;width:1850px;height:1px;background:#e1e1e1;"></div>
<div style="left:1954px;top:1527px;width:1850px;height:1px;background:#e1e1e1;"></div>
<div style="left:1954px;top:1551px;width:1850px;height:1px;background:#e1e1e1;"></div>
<div style="left:1954px;top:1575px;width:1850px;height:1px;background:#e1e1e1;"></div>
<div style="left:1954px;top:1599px;width:1850px;height:1px;background:#e1e1e1;"></div>
<div style="left:1954px;top:1623px;width:1850px;height:1px;background:#e1e1e1;"></div>
<div style="left:1954px;top:1647px;width:1850px;height:1px;background:#e1e1e1;"></div>
<div style="left:1954px;top:1671px;width:1850px;height:1px;background:#e1e1e1;"></div>
<div style="left:1954px;top:1695px;width:1850px;height:1px;background:#e1e1e1;"></div>
<div style="left:1954px;top:1719px;width:1850px;height:1px;background:#e1e1e1;"></div>
<div style="left:1954px;top:1743px;width:1850px;height:1px;background:#e1e1e1;"></div>
<div style="left:1954px;top:1767px;width:1850px;height:1px;background:#e1e1e1;"></div>
<div style="left:1954px;top:1791px;width:1850px;height:1px;background:#e1e1e1;"></div>
<div style="left:1954px;top:1815px;width:1850px;height:1px;background:#e1e1e1;"></div>
<div style="left:1954px;top:1839px;width:1850px;height:1px;background:#e1e1e1;"></div>
<div style="left:1954px;top:1863px;width:1850px;height:1px;background:#e1e1e1;"></div>
<div style="left:1954px;top:1887px;width:1850px;height:1px;background:#e1e1e1;"></div>
<div style="left:1954px;top:1911px;width:1850px;height:1px;background:#e1e1e1;"></div>
<div style="left:1954px;top:1935px;width:1850px;height:1px;background:#e1e1e1;"></div>
<div style="left:1954px;top:1959px;width:1850px;height:1px;background:#e1e1e1;"></div>
<div style="left:1954px;top:1983px;width:1850px;height:1px;background:#e1e1e1;"></div>
<div style="left:1954px;top:2007px;width:1850px;height:1px;background:#e1e1e1;"></div>
<div style="left:1954px;top:2031px;width:1850px;height:1px;background:#e1e1e1;"></div>
<div style="left:2033px;top:207px;width:1px;height:1824px;background:#e1e1e1;"></div>
<div style="left:2113px;top:207px;width:1px;height:1824px;background:#e1e1e1;"></div>
<div style="left:2193px;top:207px;width:1px;height:1824px;background:#e1e1e1;"></div>
<div style="left:2273px;top:207px;width:1px;height:1824px;background:#e1e1e1;"></div>
<div style="left:2353px;top:207px;width:1px;height:1824px;background:#e1e1e1;"></div>
<div style="left:2433px;top:207px;width:1px;height:1824px;background:#e1e1e1;"></div>
<div style="left:2513px;top:207px;width:1px;height:1824px;background:#e1e1e1;"></div>
<div style="left:2593px;top:207px;width:1px;height:1824px;background:#e1e1e1;"></div>
<div style="left:2673px;top:207px;width:1px;height:1824px;background:#e1e1e1;"></div>
<div style="left:2753px;top:207px;width:1px;height:1824px;background:#e1e1e1;"></div>
<div style="left:2833px;top:207px;width:1px;height:1824px;background:#e1e1e1;"></div>
<div style="left:2913px;top:207px;width:1px;height:1824px;background:#e1e1e1;"></div>
<div style="left:2993px;top:207px;width:1px;height:1824px;background:#e1e1e1;"></div>
<div style="left:3073px;top:207px;width:1px;height:1824px;background:#e1e1e1;"></div>
<div style="left:3153px;top:207px;width:1px;height:1824px;background:#e1e1e1;"></div>
<div style="left:3233px;top:207px;width:1px;height:1824px;background:#e1e1e1;"></div>
<div style="left:3313px;top:207px;width:1px;height:1824px;background:#e1e1e1;"></div>
<div style="left:3393px;top:207px;width:1px;height:1824px;background:#e1e1e1;"></div>
<div style="left:3473px;top:207px;width:1px;height:1824px;background:#e1e1e1;"></div>
<div style="left:3553px;top:207px;width:1px;height:1824px;background:#e1e1e1;"></div>
<div style="left:3633px;top:207px;width:1px;height:1824px;background:#e1e1e1;"></div>
<div style="left:3713px;top:207px;width:1px;height:1824px;background:#e1e1e1;"></div>
<div style="left:3793px;top:207px;width:1px;height:1824px;background:#e1e1e1;"></div>
<div style="left:2193px;top:208px;width:1px;height:23px;background:#fff;"></div>
<div style="left:2273px;top:208px;width:1px;height:23px;background:#fff;"></div>
<div style="left:2353px;top:208px;width:1px;height:23px;background:#fff;"></div>
<div style="left:2433px;top:208px;width:1px;height:23px;background:#fff;"></div>
<div style="left:2033px;top:232px;width:1px;height:23px;background:#fff;"></div>
<div style="left:2113px;top:232px;width:1px;height:23px;background:#fff;"></div>
<div style="left:2033px;top:256px;width:1px;height:23px;background:#fff;"></div>
<div style="left:2113px;top:256px;width:1px;height:23px;background:#fff;"></div>
<div style="left:2193px;top:256px;width:1px;height:23px;background:#fff;"></div>
<div style="left:2273px;top:256px;width:1px;height:23px;background:#fff;"></div>
<div style="left:2353px;top:256px;width:1px;height:23px;background:#fff;"></div>
<div style="left:2433px;top:256px;width:1px;height:23px;background:#fff;"></div>
<div style="left:2513px;top:256px;width:1px;height:23px;background:#fff;"></div>
<div style="left:2033px;top:280px;width:1px;height:23px;background:#fff;"></div>
<div style="left:2113px;top:280px;width:1px;height:23px;background:#fff;"></div>
<div style="left:2193px;top:280px;width:1px;height:23px;background:#fff;"></div>
<div style="left:2273px;top:280px;width:1px;height:23px;background:#fff;"></div>
<div style="left:2353px;top:280px;width:1px;height:23px;background:#fff;"></div>
<div style="left:2433px;top:280px;width:1px;height:23px;background:#fff;"></div>
<div style="left:2513px;top:280px;width:1px;height:23px;background:#fff;"></div>
<div style="left:2593px;top:280px;width:1px;height:23px;background:#fff;"></div>
<div style="left:2673px;top:280px;width:1px;height:23px;background:#fff;"></div>
<div style="left:2033px;top:328px;width:1px;height:23px;background:#fff;"></div>
<div style="left:2033px;top:352px;width:1px;height:23px;background:#fff;"></div>
<div style="left:2033px;top:376px;width:1px;height:23px;background:#fff;"></div>
<div style="left:2033px;top:400px;width:1px;height:23px;background:#fff;"></div>
<div style="left:2033px;top:424px;width:1px;height:23px;background:#fff;"></div>
<div style="left:2033px;top:448px;width:1px;height:23px;background:#fff;"></div>
<div style="left:2033px;top:472px;width:1px;height:23px;background:#fff;"></div>
<div style="left:2033px;top:496px;width:1px;height:23px;background:#fff;"></div>
<div style="left:2033px;top:520px;width:1px;height:23px;background:#fff;"></div>
<div style="left:2033px;top:568px;width:1px;height:23px;background:#fff;"></div>
<div style="left:2033px;top:592px;width:1px;height:23px;background:#fff;"></div>
<div style="left:2033px;top:616px;width:1px;height:23px;background:#fff;"></div>
<div style="left:2033px;top:664px;width:1px;height:23px;background:#fff;"></div>
<div style="left:2033px;top:712px;width:1px;height:23px;background:#fff;"></div>
<div style="left:2033px;top:736px;width:1px;height:23px;background:#fff;"></div>
<div style="left:2033px;top:760px;width:1px;height:23px;background:#fff;"></div>
<div style="left:2033px;top:784px;width:1px;height:23px;background:#fff;"></div>
<div style="left:2353px;top:568px;width:1px;height:23px;background:#fff;"></div>
<div style="left:2113px;top:640px;width:1px;height:23px;background:#fff;"></div>
<div style="left:2193px;top:640px;width:1px;height:23px;background:#fff;"></div>
<div style="left:2273px;top:640px;width:1px;height:23px;background:#fff;"></div>
<div style="left:2353px;top:640px;width:1px;height:23px;background:#fff;"></div>
<span style="left:2116.50px;top:210.59px;line-height:20px;font-size:15.6px;color:#000;letter-spacing:0.189px;">Registre des dépenses professionnelles pour 2022</span>
<span style="left:1956.50px;top:234.59px;line-height:20px;font-size:15.6px;color:#000;letter-spacing:0.509px;">Sources d&#x27;information</span>
<span style="left:1956.50px;top:258.59px;line-height:20px;font-size:15.6px;color:#000;letter-spacing:0.227px;">Les données des cellules en bleu sont importées de vos registres (autres feuilles).</span>
<span style="left:1956.50px;top:282.59px;line-height:20px;font-size:15.6px;color:#000;letter-spacing:0.386px;">Votre employeur vous fournira des feuillets d&#x27;impôt avec les montants pour les autres cellules de calcul.</span>
<span style="left:2154.50px;top:306.59px;line-height:20px;font-size:15.6px;color:#000;letter-spacing:0.099px;">2022</span>
<span style="left:1956.50px;top:330.59px;line-height:20px;font-size:15.6px;color:#000;letter-spacing:0.266px;">Postes comptables</span>
<span style="left:2116.50px;top:330.59px;line-height:20px;font-size:15.6px;color:#000;letter-spacing:1.157px;">Montant</span>
<span style="left:1956.50px;top:354.59px;line-height:20px;font-size:15.6px;color:#000;letter-spacing:0.189px;width:156.5px;overflow:hidden;">Cotisations prof. AMF CSF et autres coûts UFC</span>
<span style="left:1956.50px;top:378.59px;line-height:20px;font-size:15.6px;color:#000;letter-spacing:0.189px;width:156.5px;overflow:hidden;">Assurance responsabilité professionnelle (employeur)</span>
<span style="left:1956.50px;top:402.59px;line-height:20px;font-size:15.6px;color:#000;letter-spacing:0.189px;width:156.5px;overflow:hidden;">Intérêts sur prêts déductibles (employeur)</span>
<span style="left:1956.50px;top:426.59px;line-height:20px;font-size:15.6px;color:#000;letter-spacing:0.189px;width:156.5px;overflow:hidden;">Frais bureau et de réseau (employeur)</span>
<span style="left:1956.50px;top:450.59px;line-height:20px;font-size:15.6px;color:#000;letter-spacing:0.189px;width:156.5px;overflow:hidden;">Fournitures de bureau personnelles</span>
<span style="left:1956.50px;top:474.59px;line-height:20px;font-size:15.6px;color:#000;letter-spacing:0.189px;width:156.5px;overflow:hidden;">Frais de gestion et d&#x27;administration (employeur)</span>
<span style="left:1956.50px;top:498.59px;line-height:20px;font-size:15.6px;color:#000;letter-spacing:0.189px;width:156.5px;overflow:hidden;">Téléphonie personnelle et de bureau</span>
<span style="left:1956.50px;top:522.59px;line-height:20px;font-size:15.6px;color:#000;letter-spacing:0.189px;width:156.5px;overflow:hidden;">Postes et livraison courrier (employeur)</span>
<span style="left:1956.50px;top:570.59px;line-height:20px;font-size:15.6px;color:#000;letter-spacing:0.189px;width:156.5px;overflow:hidden;">Déductions pour frais auto (à 0%)</span>
<span style="left:1956.50px;top:594.59px;line-height:20px;font-size:15.6px;color:#000;letter-spacing:0.189px;width:156.5px;overflow:hidden;">Frais de représentation (à 50%)</span>
<span style="left:1956.50px;top:618.59px;line-height:20px;font-size:15.6px;color:#000;letter-spacing:0.189px;width:156.5px;overflow:hidden;">Total des frais déductibles</span>
<span style="left:1956.50px;top:666.59px;line-height:20px;font-size:15.6px;color:#000;letter-spacing:0.189px;width:156.5px;overflow:hidden;">Détails frais automobile</span>
<span style="left:1956.50px;top:738.59px;line-height:20px;font-size:15.6px;color:#000;letter-spacing:0.189px;width:156.5px;overflow:hidden;">Entretien, permis et réparations</span>
<span style="left:1956.50px;top:762.59px;line-height:20px;font-size:15.6px;color:#000;letter-spacing:0.189px;width:156.5px;overflow:hidden;">Total des frais engendrés</span>
<span style="left:1956.50px;top:786.59px;line-height:20px;font-size:15.6px;color:#000;letter-spacing:0.189px;width:156.5px;overflow:hidden;">Utilisation pour le travail en %</span>
<span style="left:1956.50px;top:714.59px;line-height:20px;font-size:15.6px;color:#000;letter-spacing:0.512px;">Location de voiture</span>
<span style="left:2180.81px;top:354.59px;line-height:20px;font-size:15.6px;color:#000;">0</span>
<span style="left:2180.81px;top:378.59px;line-height:20px;font-size:15.6px;color:#000;">0</span>
<span style="left:2180.81px;top:402.59px;line-height:20px;font-size:15.6px;color:#000;">0</span>
<span style="left:2180.81px;top:426.59px;line-height:20px;font-size:15.6px;color:#000;">0</span>
<span style="left:2131.30px;top:450.59px;line-height:20px;font-size:15.6px;color:#000;letter-spacing:0.304px;">1065.32</span>
<span style="left:2180.81px;top:474.59px;line-height:20px;font-size:15.6px;color:#000;">0</span>
<span style="left:2180.81px;top:498.59px;line-height:20px;font-size:15.6px;color:#000;">0</span>
<span style="left:2180.81px;top:522.59px;line-height:20px;font-size:15.6px;color:#000;">0</span>
<span style="left:2180.81px;top:570.59px;line-height:20px;font-size:15.6px;color:#000;">0</span>
<span style="left:2122.60px;top:594.59px;line-height:20px;font-size:15.6px;color:#000;letter-spacing:0.43px;">1147.625</span>
<span style="left:2122.60px;top:618.59px;line-height:20px;font-size:15.6px;color:#000;letter-spacing:0.265px;">2212.945</span>
<span style="left:2180.81px;top:690.59px;line-height:20px;font-size:15.6px;color:#000;">0</span>
<span style="left:2154.00px;top:714.59px;line-height:20px;font-size:15.6px;color:#000;letter-spacing:0.266px;">8632</span>
<span style="left:2180.81px;top:738.59px;line-height:20px;font-size:15.6px;color:#000;">0</span>
<span style="left:2154.00px;top:762.59px;line-height:20px;font-size:15.6px;color:#000;letter-spacing:0.266px;">8632</span>
<span style="left:2180.81px;top:786.59px;line-height:20px;font-size:15.6px;color:#000;">0</span>
<span style="left:2116.50px;top:666.59px;line-height:20px;font-size:15.6px;color:#000;letter-spacing:1.157px;">Montant</span>
<span style="left:2100.81px;top:690.59px;line-height:20px;font-size:15.6px;color:#000;">1</span>
<span style="left:2276.50px;top:426.59px;line-height:20px;font-size:15.6px;color:#000;letter-spacing:0.189px;width:76.5px;overflow:hidden;">Sommaire 2022</span>
<span style="left:2356.50px;top:426.59px;line-height:20px;font-size:15.6px;color:#000;letter-spacing:1.157px;">Montant</span>
<span style="left:2276.50px;top:450.59px;line-height:20px;font-size:15.6px;color:#000;letter-spacing:0.189px;width:76.5px;overflow:hidden;">Revenus bruts d&#x27;entreprise</span>
<span style="left:2361.90px;top:450.59px;line-height:20px;font-size:15.6px;color:#000;letter-spacing:0.365px;">88565.64</span>
<span style="left:2276.50px;top:474.59px;line-height:20px;font-size:15.6px;color:#000;letter-spacing:0.189px;width:76.5px;overflow:hidden;">Dépenses d&#x27;entreprise</span>
<span style="left:2420.81px;top:474.59px;line-height:20px;font-size:15.6px;color:#000;">0</span>
<span style="left:2276.50px;top:498.59px;line-height:20px;font-size:15.6px;color:#000;letter-spacing:0.189px;width:76.5px;overflow:hidden;">Revenus nets d&#x27;entreprise</span>
<span style="left:2361.90px;top:498.59px;line-height:20px;font-size:15.6px;color:#000;letter-spacing:0.365px;">88565.64</span>
<span style="left:2276.50px;top:570.59px;line-height:20px;font-size:15.6px;color:#000;letter-spacing:0.17px;">Taxes à payer 2020</span>
<span style="left:2276.50px;top:594.59px;line-height:20px;font-size:15.6px;color:#000;letter-spacing:0.189px;width:76.5px;overflow:hidden;">Revenu taxable</span>
<span style="left:2361.90px;top:594.59px;line-height:20px;font-size:15.6px;color:#000;letter-spacing:0.365px;">88565.64</span>
<span style="left:2276.50px;top:618.59px;line-height:20px;font-size:15.6px;color:#000;letter-spacing:0.189px;width:76.5px;overflow:hidden;">Dépenses taxés</span>
<span style="left:2420.81px;top:618.59px;line-height:20px;font-size:15.6px;color:#000;">0</span>
<span style="left:2036.50px;top:642.59px;line-height:20px;font-size:15.6px;color:#000;letter-spacing:0.189px;width:316.5px;overflow:hidden;">NOTE : ne pas changer le contenu des cellules en bleu, elles contiennent des formules.</span>
<span style="left:2371.30px;top:642.59px;line-height:20px;font-size:15.6px;color:#000;letter-spacing:0.304px;">13262.7</span>
<div style="left:1920px;top:184px;width:1883px;height:23px;background:#0a0a0a;"></div>
<div style="left:1920px;top:207px;width:34px;height:1824px;background:#0a0a0a;"></div>
<svg style="left:1934px;top:189px;" width="17" height="16" viewBox="0 0 17 16"><path d="M16.500 0 V15.500 H1 Z" fill="#6e6e6e"/></svg>
<div style="left:1953px;top:184px;width:1px;height:23px;background:#6c6c6c;"></div>
<div style="left:1920px;top:207px;width:34px;height:1px;background:#6c6c6c;"></div>
<span style="left:1988.80px;top:186.39px;line-height:20px;font-size:15.6px;color:#ffffff;">A</span>
<div style="left:2033px;top:184px;width:1px;height:23px;background:#6c6c6c;"></div>
<span style="left:2068.80px;top:186.39px;line-height:20px;font-size:15.6px;color:#ffffff;">B</span>
<div style="left:2113px;top:184px;width:1px;height:23px;background:#6c6c6c;"></div>
<span style="left:2148.37px;top:186.39px;line-height:20px;font-size:15.6px;color:#ffffff;">C</span>
<div style="left:2193px;top:184px;width:1px;height:23px;background:#6c6c6c;"></div>
<span style="left:2228.37px;top:186.39px;line-height:20px;font-size:15.6px;color:#ffffff;">D</span>
<div style="left:2273px;top:184px;width:1px;height:23px;background:#6c6c6c;"></div>
<span style="left:2308.80px;top:186.39px;line-height:20px;font-size:15.6px;color:#ffffff;">E</span>
<div style="left:2353px;top:184px;width:1px;height:23px;background:#6c6c6c;"></div>
<span style="left:2389.23px;top:186.39px;line-height:20px;font-size:15.6px;color:#ffffff;">F</span>
<div style="left:2433px;top:184px;width:1px;height:23px;background:#6c6c6c;"></div>
<span style="left:2467.93px;top:186.39px;line-height:20px;font-size:15.6px;color:#ffffff;">G</span>
<div style="left:2513px;top:184px;width:1px;height:23px;background:#6c6c6c;"></div>
<span style="left:2548.37px;top:186.39px;line-height:20px;font-size:15.6px;color:#ffffff;">H</span>
<div style="left:2593px;top:184px;width:1px;height:23px;background:#6c6c6c;"></div>
<span style="left:2631.83px;top:186.39px;line-height:20px;font-size:15.6px;color:#ffffff;">I</span>
<div style="left:2673px;top:184px;width:1px;height:23px;background:#6c6c6c;"></div>
<span style="left:2710.10px;top:186.39px;line-height:20px;font-size:15.6px;color:#ffffff;">J</span>
<div style="left:2753px;top:184px;width:1px;height:23px;background:#6c6c6c;"></div>
<span style="left:2788.80px;top:186.39px;line-height:20px;font-size:15.6px;color:#ffffff;">K</span>
<div style="left:2833px;top:184px;width:1px;height:23px;background:#6c6c6c;"></div>
<span style="left:2869.66px;top:186.39px;line-height:20px;font-size:15.6px;color:#ffffff;">L</span>
<div style="left:2913px;top:184px;width:1px;height:23px;background:#6c6c6c;"></div>
<span style="left:2947.50px;top:186.39px;line-height:20px;font-size:15.6px;color:#ffffff;">M</span>
<div style="left:2993px;top:184px;width:1px;height:23px;background:#6c6c6c;"></div>
<span style="left:3028.37px;top:186.39px;line-height:20px;font-size:15.6px;color:#ffffff;">N</span>
<div style="left:3073px;top:184px;width:1px;height:23px;background:#6c6c6c;"></div>
<span style="left:3107.93px;top:186.39px;line-height:20px;font-size:15.6px;color:#ffffff;">O</span>
<div style="left:3153px;top:184px;width:1px;height:23px;background:#6c6c6c;"></div>
<span style="left:3188.80px;top:186.39px;line-height:20px;font-size:15.6px;color:#ffffff;">P</span>
<div style="left:3233px;top:184px;width:1px;height:23px;background:#6c6c6c;"></div>
<span style="left:3267.93px;top:186.39px;line-height:20px;font-size:15.6px;color:#ffffff;">Q</span>
<div style="left:3313px;top:184px;width:1px;height:23px;background:#6c6c6c;"></div>
<span style="left:3348.37px;top:186.39px;line-height:20px;font-size:15.6px;color:#ffffff;">R</span>
<div style="left:3393px;top:184px;width:1px;height:23px;background:#6c6c6c;"></div>
<span style="left:3428.80px;top:186.39px;line-height:20px;font-size:15.6px;color:#ffffff;">S</span>
<div style="left:3473px;top:184px;width:1px;height:23px;background:#6c6c6c;"></div>
<span style="left:3509.23px;top:186.39px;line-height:20px;font-size:15.6px;color:#ffffff;">T</span>
<div style="left:3553px;top:184px;width:1px;height:23px;background:#6c6c6c;"></div>
<span style="left:3588.37px;top:186.39px;line-height:20px;font-size:15.6px;color:#ffffff;">U</span>
<div style="left:3633px;top:184px;width:1px;height:23px;background:#6c6c6c;"></div>
<span style="left:3668.80px;top:186.39px;line-height:20px;font-size:15.6px;color:#ffffff;">V</span>
<div style="left:3713px;top:184px;width:1px;height:23px;background:#6c6c6c;"></div>
<span style="left:3746.64px;top:186.39px;line-height:20px;font-size:15.6px;color:#ffffff;">W</span>
<div style="left:3793px;top:184px;width:1px;height:23px;background:#6c6c6c;"></div>
<span style="left:3828.80px;top:186.39px;line-height:20px;font-size:15.6px;color:#ffffff;">X</span>
<div style="left:3873px;top:184px;width:1px;height:23px;background:#6c6c6c;"></div>
<div style="left:1920px;top:231px;width:33px;height:1px;background:#6c6c6c;"></div>
<span style="left:1932.22px;top:210.86px;line-height:20px;font-size:15.4px;color:#ffffff;">1</span>
<div style="left:1920px;top:255px;width:33px;height:1px;background:#6c6c6c;"></div>
<span style="left:1932.22px;top:234.86px;line-height:20px;font-size:15.4px;color:#ffffff;">2</span>
<div style="left:1920px;top:279px;width:33px;height:1px;background:#6c6c6c;"></div>
<span style="left:1932.22px;top:258.86px;line-height:20px;font-size:15.4px;color:#ffffff;">3</span>
<div style="left:1920px;top:303px;width:33px;height:1px;background:#6c6c6c;"></div>
<span style="left:1932.22px;top:282.86px;line-height:20px;font-size:15.4px;color:#ffffff;">4</span>
<div style="left:1920px;top:327px;width:33px;height:1px;background:#6c6c6c;"></div>
<span style="left:1932.22px;top:306.86px;line-height:20px;font-size:15.4px;color:#ffffff;">5</span>
<div style="left:1920px;top:351px;width:33px;height:1px;background:#6c6c6c;"></div>
<span style="left:1932.22px;top:330.86px;line-height:20px;font-size:15.4px;color:#ffffff;">6</span>
<div style="left:1920px;top:375px;width:33px;height:1px;background:#6c6c6c;"></div>
<span style="left:1932.22px;top:354.86px;line-height:20px;font-size:15.4px;color:#ffffff;">7</span>
<div style="left:1920px;top:399px;width:33px;height:1px;background:#6c6c6c;"></div>
<span style="left:1932.22px;top:378.86px;line-height:20px;font-size:15.4px;color:#ffffff;">8</span>
<div style="left:1920px;top:423px;width:33px;height:1px;background:#6c6c6c;"></div>
<span style="left:1932.22px;top:402.86px;line-height:20px;font-size:15.4px;color:#ffffff;">9</span>
<div style="left:1920px;top:447px;width:33px;height:1px;background:#6c6c6c;"></div>
<span style="left:1927.94px;top:426.86px;line-height:20px;font-size:15.4px;color:#ffffff;">10</span>
<div style="left:1920px;top:471px;width:33px;height:1px;background:#6c6c6c;"></div>
<span style="left:1928.51px;top:450.86px;line-height:20px;font-size:15.4px;color:#ffffff;">11</span>
<div style="left:1920px;top:495px;width:33px;height:1px;background:#6c6c6c;"></div>
<span style="left:1927.94px;top:474.86px;line-height:20px;font-size:15.4px;color:#ffffff;">12</span>
<div style="left:1920px;top:519px;width:33px;height:1px;background:#6c6c6c;"></div>
<span style="left:1927.94px;top:498.86px;line-height:20px;font-size:15.4px;color:#ffffff;">13</span>
<div style="left:1920px;top:543px;width:33px;height:1px;background:#6c6c6c;"></div>
<span style="left:1927.94px;top:522.86px;line-height:20px;font-size:15.4px;color:#ffffff;">14</span>
<div style="left:1920px;top:567px;width:33px;height:1px;background:#6c6c6c;"></div>
<span style="left:1927.94px;top:546.86px;line-height:20px;font-size:15.4px;color:#ffffff;">15</span>
<div style="left:1920px;top:591px;width:33px;height:1px;background:#6c6c6c;"></div>
<span style="left:1927.94px;top:570.86px;line-height:20px;font-size:15.4px;color:#ffffff;">16</span>
<div style="left:1920px;top:615px;width:33px;height:1px;background:#6c6c6c;"></div>
<span style="left:1927.94px;top:594.86px;line-height:20px;font-size:15.4px;color:#ffffff;">17</span>
<div style="left:1920px;top:639px;width:33px;height:1px;background:#6c6c6c;"></div>
<span style="left:1927.94px;top:618.86px;line-height:20px;font-size:15.4px;color:#ffffff;">18</span>
<div style="left:1920px;top:663px;width:33px;height:1px;background:#6c6c6c;"></div>
<span style="left:1927.94px;top:642.86px;line-height:20px;font-size:15.4px;color:#ffffff;">19</span>
<div style="left:1920px;top:687px;width:33px;height:1px;background:#6c6c6c;"></div>
<span style="left:1927.94px;top:666.86px;line-height:20px;font-size:15.4px;color:#ffffff;">20</span>
<div style="left:1920px;top:711px;width:33px;height:1px;background:#6c6c6c;"></div>
<span style="left:1927.94px;top:690.86px;line-height:20px;font-size:15.4px;color:#ffffff;">21</span>
<div style="left:1920px;top:735px;width:33px;height:1px;background:#6c6c6c;"></div>
<span style="left:1927.94px;top:714.86px;line-height:20px;font-size:15.4px;color:#ffffff;">22</span>
<div style="left:1920px;top:759px;width:33px;height:1px;background:#6c6c6c;"></div>
<span style="left:1927.94px;top:738.86px;line-height:20px;font-size:15.4px;color:#ffffff;">23</span>
<div style="left:1920px;top:783px;width:33px;height:1px;background:#6c6c6c;"></div>
<span style="left:1927.94px;top:762.86px;line-height:20px;font-size:15.4px;color:#ffffff;">24</span>
<div style="left:1920px;top:807px;width:33px;height:1px;background:#6c6c6c;"></div>
<span style="left:1927.94px;top:786.86px;line-height:20px;font-size:15.4px;color:#ffffff;">25</span>
<div style="left:1920px;top:831px;width:33px;height:1px;background:#6c6c6c;"></div>
<span style="left:1927.94px;top:810.86px;line-height:20px;font-size:15.4px;color:#ffffff;">26</span>
<div style="left:1920px;top:855px;width:33px;height:1px;background:#6c6c6c;"></div>
<span style="left:1927.94px;top:834.86px;line-height:20px;font-size:15.4px;color:#ffffff;">27</span>
<div style="left:1920px;top:879px;width:33px;height:1px;background:#6c6c6c;"></div>
<span style="left:1927.94px;top:858.86px;line-height:20px;font-size:15.4px;color:#ffffff;">28</span>
<div style="left:1920px;top:903px;width:33px;height:1px;background:#6c6c6c;"></div>
<span style="left:1927.94px;top:882.86px;line-height:20px;font-size:15.4px;color:#ffffff;">29</span>
<div style="left:1920px;top:927px;width:33px;height:1px;background:#6c6c6c;"></div>
<span style="left:1927.94px;top:906.86px;line-height:20px;font-size:15.4px;color:#ffffff;">30</span>
<div style="left:1920px;top:951px;width:33px;height:1px;background:#6c6c6c;"></div>
<span style="left:1927.94px;top:930.86px;line-height:20px;font-size:15.4px;color:#ffffff;">31</span>
<div style="left:1920px;top:975px;width:33px;height:1px;background:#6c6c6c;"></div>
<span style="left:1927.94px;top:954.86px;line-height:20px;font-size:15.4px;color:#ffffff;">32</span>
<div style="left:1920px;top:999px;width:33px;height:1px;background:#6c6c6c;"></div>
<span style="left:1927.94px;top:978.86px;line-height:20px;font-size:15.4px;color:#ffffff;">33</span>
<div style="left:1920px;top:1023px;width:33px;height:1px;background:#6c6c6c;"></div>
<span style="left:1927.94px;top:1002.86px;line-height:20px;font-size:15.4px;color:#ffffff;">34</span>
<div style="left:1920px;top:1047px;width:33px;height:1px;background:#6c6c6c;"></div>
<span style="left:1927.94px;top:1026.86px;line-height:20px;font-size:15.4px;color:#ffffff;">35</span>
<div style="left:1920px;top:1071px;width:33px;height:1px;background:#6c6c6c;"></div>
<span style="left:1927.94px;top:1050.86px;line-height:20px;font-size:15.4px;color:#ffffff;">36</span>
<div style="left:1920px;top:1095px;width:33px;height:1px;background:#6c6c6c;"></div>
<span style="left:1927.94px;top:1074.86px;line-height:20px;font-size:15.4px;color:#ffffff;">37</span>
<div style="left:1920px;top:1119px;width:33px;height:1px;background:#6c6c6c;"></div>
<span style="left:1927.94px;top:1098.86px;line-height:20px;font-size:15.4px;color:#ffffff;">38</span>
<div style="left:1920px;top:1143px;width:33px;height:1px;background:#6c6c6c;"></div>
<span style="left:1927.94px;top:1122.86px;line-height:20px;font-size:15.4px;color:#ffffff;">39</span>
<div style="left:1920px;top:1167px;width:33px;height:1px;background:#6c6c6c;"></div>
<span style="left:1927.94px;top:1146.86px;line-height:20px;font-size:15.4px;color:#ffffff;">40</span>
<div style="left:1920px;top:1191px;width:33px;height:1px;background:#6c6c6c;"></div>
<span style="left:1927.94px;top:1170.86px;line-height:20px;font-size:15.4px;color:#ffffff;">41</span>
<div style="left:1920px;top:1215px;width:33px;height:1px;background:#6c6c6c;"></div>
<span style="left:1927.94px;top:1194.86px;line-height:20px;font-size:15.4px;color:#ffffff;">42</span>
<div style="left:1920px;top:1239px;width:33px;height:1px;background:#6c6c6c;"></div>
<span style="left:1927.94px;top:1218.86px;line-height:20px;font-size:15.4px;color:#ffffff;">43</span>
<div style="left:1920px;top:1263px;width:33px;height:1px;background:#6c6c6c;"></div>
<span style="left:1927.94px;top:1242.86px;line-height:20px;font-size:15.4px;color:#ffffff;">44</span>
<div style="left:1920px;top:1287px;width:33px;height:1px;background:#6c6c6c;"></div>
<span style="left:1927.94px;top:1266.86px;line-height:20px;font-size:15.4px;color:#ffffff;">45</span>
<div style="left:1920px;top:1311px;width:33px;height:1px;background:#6c6c6c;"></div>
<span style="left:1927.94px;top:1290.86px;line-height:20px;font-size:15.4px;color:#ffffff;">46</span>
<div style="left:1920px;top:1335px;width:33px;height:1px;background:#6c6c6c;"></div>
<span style="left:1927.94px;top:1314.86px;line-height:20px;font-size:15.4px;color:#ffffff;">47</span>
<div style="left:1920px;top:1359px;width:33px;height:1px;background:#6c6c6c;"></div>
<span style="left:1927.94px;top:1338.86px;line-height:20px;font-size:15.4px;color:#ffffff;">48</span>
<div style="left:1920px;top:1383px;width:33px;height:1px;background:#6c6c6c;"></div>
<span style="left:1927.94px;top:1362.86px;line-height:20px;font-size:15.4px;color:#ffffff;">49</span>
<div style="left:1920px;top:1407px;width:33px;height:1px;background:#6c6c6c;"></div>
<span style="left:1927.94px;top:1386.86px;line-height:20px;font-size:15.4px;color:#ffffff;">50</span>
<div style="left:1920px;top:1431px;width:33px;height:1px;background:#6c6c6c;"></div>
<span style="left:1927.94px;top:1410.86px;line-height:20px;font-size:15.4px;color:#ffffff;">51</span>
<div style="left:1920px;top:1455px;width:33px;height:1px;background:#6c6c6c;"></div>
<span style="left:1927.94px;top:1434.86px;line-height:20px;font-size:15.4px;color:#ffffff;">52</span>
<div style="left:1920px;top:1479px;width:33px;height:1px;background:#6c6c6c;"></div>
<span style="left:1927.94px;top:1458.86px;line-height:20px;font-size:15.4px;color:#ffffff;">53</span>
<div style="left:1920px;top:1503px;width:33px;height:1px;background:#6c6c6c;"></div>
<span style="left:1927.94px;top:1482.86px;line-height:20px;font-size:15.4px;color:#ffffff;">54</span>
<div style="left:1920px;top:1527px;width:33px;height:1px;background:#6c6c6c;"></div>
<span style="left:1927.94px;top:1506.86px;line-height:20px;font-size:15.4px;color:#ffffff;">55</span>
<div style="left:1920px;top:1551px;width:33px;height:1px;background:#6c6c6c;"></div>
<span style="left:1927.94px;top:1530.86px;line-height:20px;font-size:15.4px;color:#ffffff;">56</span>
<div style="left:1920px;top:1575px;width:33px;height:1px;background:#6c6c6c;"></div>
<span style="left:1927.94px;top:1554.86px;line-height:20px;font-size:15.4px;color:#ffffff;">57</span>
<div style="left:1920px;top:1599px;width:33px;height:1px;background:#6c6c6c;"></div>
<span style="left:1927.94px;top:1578.86px;line-height:20px;font-size:15.4px;color:#ffffff;">58</span>
<div style="left:1920px;top:1623px;width:33px;height:1px;background:#6c6c6c;"></div>
<span style="left:1927.94px;top:1602.86px;line-height:20px;font-size:15.4px;color:#ffffff;">59</span>
<div style="left:1920px;top:1647px;width:33px;height:1px;background:#6c6c6c;"></div>
<span style="left:1927.94px;top:1626.86px;line-height:20px;font-size:15.4px;color:#ffffff;">60</span>
<div style="left:1920px;top:1671px;width:33px;height:1px;background:#6c6c6c;"></div>
<span style="left:1927.94px;top:1650.86px;line-height:20px;font-size:15.4px;color:#ffffff;">61</span>
<div style="left:1920px;top:1695px;width:33px;height:1px;background:#6c6c6c;"></div>
<span style="left:1927.94px;top:1674.86px;line-height:20px;font-size:15.4px;color:#ffffff;">62</span>
<div style="left:1920px;top:1719px;width:33px;height:1px;background:#6c6c6c;"></div>
<span style="left:1927.94px;top:1698.86px;line-height:20px;font-size:15.4px;color:#ffffff;">63</span>
<div style="left:1920px;top:1743px;width:33px;height:1px;background:#6c6c6c;"></div>
<span style="left:1927.94px;top:1722.86px;line-height:20px;font-size:15.4px;color:#ffffff;">64</span>
<div style="left:1920px;top:1767px;width:33px;height:1px;background:#6c6c6c;"></div>
<span style="left:1927.94px;top:1746.86px;line-height:20px;font-size:15.4px;color:#ffffff;">65</span>
<div style="left:1920px;top:1791px;width:33px;height:1px;background:#6c6c6c;"></div>
<span style="left:1927.94px;top:1770.86px;line-height:20px;font-size:15.4px;color:#ffffff;">66</span>
<div style="left:1920px;top:1815px;width:33px;height:1px;background:#6c6c6c;"></div>
<span style="left:1927.94px;top:1794.86px;line-height:20px;font-size:15.4px;color:#ffffff;">67</span>
<div style="left:1920px;top:1839px;width:33px;height:1px;background:#6c6c6c;"></div>
<span style="left:1927.94px;top:1818.86px;line-height:20px;font-size:15.4px;color:#ffffff;">68</span>
<div style="left:1920px;top:1863px;width:33px;height:1px;background:#6c6c6c;"></div>
<span style="left:1927.94px;top:1842.86px;line-height:20px;font-size:15.4px;color:#ffffff;">69</span>
<div style="left:1920px;top:1887px;width:33px;height:1px;background:#6c6c6c;"></div>
<span style="left:1927.94px;top:1866.86px;line-height:20px;font-size:15.4px;color:#ffffff;">70</span>
<div style="left:1920px;top:1911px;width:33px;height:1px;background:#6c6c6c;"></div>
<span style="left:1927.94px;top:1890.86px;line-height:20px;font-size:15.4px;color:#ffffff;">71</span>
<div style="left:1920px;top:1935px;width:33px;height:1px;background:#6c6c6c;"></div>
<span style="left:1927.94px;top:1914.86px;line-height:20px;font-size:15.4px;color:#ffffff;">72</span>
<div style="left:1920px;top:1959px;width:33px;height:1px;background:#6c6c6c;"></div>
<span style="left:1927.94px;top:1938.86px;line-height:20px;font-size:15.4px;color:#ffffff;">73</span>
<div style="left:1920px;top:1983px;width:33px;height:1px;background:#6c6c6c;"></div>
<span style="left:1927.94px;top:1962.86px;line-height:20px;font-size:15.4px;color:#ffffff;">74</span>
<div style="left:1920px;top:2007px;width:33px;height:1px;background:#6c6c6c;"></div>
<span style="left:1927.94px;top:1986.86px;line-height:20px;font-size:15.4px;color:#ffffff;">75</span>
<div style="left:1920px;top:2031px;width:33px;height:1px;background:#6c6c6c;"></div>
<span style="left:1927.94px;top:2010.86px;line-height:20px;font-size:15.4px;color:#ffffff;">76</span>
<div style="left:2050px;top:2031px;width:180px;height:31px;background:#fff;"></div>
<div style="left:1920px;top:2031px;width:141px;height:31px;background:#0a0a0a;border-top-right-radius:6px;"></div>
<div style="left:2216px;top:2031px;width:1587px;height:31px;background:#0a0a0a;border-top-left-radius:6px;"></div>
<svg style="left:1951px;top:2043px;" width="10" height="14" viewBox="0 0 10 14"><path d="M8 1.500 L2 7 L8 12.500" fill="none" stroke="#8a8a8a" stroke-width="1.4" stroke-linecap="round" stroke-linejoin="round"/></svg>
<svg style="left:1992px;top:2043px;" width="10" height="14" viewBox="0 0 10 14"><path d="M2 1.500 L8 7 L2 12.500" fill="none" stroke="#cfcfcf" stroke-width="1.4" stroke-linecap="round" stroke-linejoin="round"/></svg>
<span style="left:2072.00px;top:2036.62px;line-height:23px;font-size:18.4px;color:#1c1c1c;letter-spacing:-0.308px;-webkit-text-stroke:0.5px #1c1c1c;">Sommaire_impôt</span>
<div style="left:2071px;top:2060.4px;width:135px;height:1.6px;background:#1e7b46;"></div>
<span style="left:2240.00px;top:2039.59px;line-height:24px;font-size:18.5px;color:#ffffff;letter-spacing:-0.472px;">Kilométrage</span>
<span style="left:2367.50px;top:2039.59px;line-height:24px;font-size:18.5px;color:#ffffff;letter-spacing:-0.841px;">Frais Medicaux</span>
<span style="left:2516.00px;top:2039.59px;line-height:24px;font-size:18.5px;color:#ffffff;letter-spacing:-1.175px;">Essence_Entretien</span>
<span style="left:2687.00px;top:2039.59px;line-height:24px;font-size:18.5px;color:#ffffff;letter-spacing:-0.608px;">Fournitures</span>
<span style="left:2811.00px;top:2039.59px;line-height:24px;font-size:18.5px;color:#ffffff;letter-spacing:-0.691px;">Représentation</span>
<span style="left:2961.50px;top:2039.59px;line-height:24px;font-size:18.5px;color:#ffffff;letter-spacing:-0.727px;">Téléphonie</span>
<div style="left:2221.5px;top:2039px;width:1.2px;height:23px;background:#5a5a5a;"></div>
<div style="left:2349px;top:2039px;width:1.2px;height:23px;background:#5a5a5a;"></div>
<div style="left:2497.5px;top:2039px;width:1.2px;height:23px;background:#5a5a5a;"></div>
<div style="left:2669px;top:2039px;width:1.2px;height:23px;background:#5a5a5a;"></div>
<div style="left:2791px;top:2039px;width:1.2px;height:23px;background:#5a5a5a;"></div>
<div style="left:2943px;top:2039px;width:1.2px;height:23px;background:#5a5a5a;"></div>
<div style="left:3062px;top:2039px;width:1.2px;height:23px;background:#5a5a5a;"></div>
<span style="left:3082.00px;top:2039.59px;line-height:24px;font-size:18.5px;color:#ffffff;letter-spacing:-0.691px;width:164px;overflow:hidden;">Cotisations_Formation</span>
<div style="left:3258px;top:2048.5px;width:3.6px;height:3.6px;background:#e0e0e0;border-radius:1.8px;"></div>
<div style="left:3263.3px;top:2048.5px;width:3.6px;height:3.6px;background:#e0e0e0;border-radius:1.8px;"></div>
<div style="left:3268.6px;top:2048.5px;width:3.6px;height:3.6px;background:#e0e0e0;border-radius:1.8px;"></div>
<div style="left:3298px;top:2049.3px;width:14px;height:1.5px;background:#6a6a6a;"></div>
<div style="left:3304.25px;top:2043px;width:1.5px;height:14px;background:#6a6a6a;"></div>
<div style="left:3344.7px;top:2044px;width:2.8px;height:2.8px;background:#e6e6e6;"></div>
<div style="left:3344.7px;top:2049.5px;width:2.8px;height:2.8px;background:#e6e6e6;"></div>
<div style="left:3344.7px;top:2055px;width:2.8px;height:2.8px;background:#e6e6e6;"></div>
<div style="left:3365px;top:2039px;width:500px;height:26px;background:#191919;border-radius:13px;"></div>
<svg style="left:3372px;top:2044px;" width="10" height="13" viewBox="0 0 10 13"><path d="M0.500 6.500 L9 0.500 Q10 6.500 9 12.500 Z" fill="#9e9e9e"/></svg>
<div style="left:3387px;top:2044.5px;width:393px;height:12px;background:#9e9e9e;border-radius:6px;"></div>
<div style="left:3798px;top:2046px;width:8px;height:12px;background:#9e9e9e;border-radius:3px;"></div>
<svg style="left:1940px;top:20px;" width="20" height="20" viewBox="0 0 20 20"><rect x="5" y="0" width="15" height="20" rx="2" fill="#1d6f42"/><rect x="5" y="0" width="7.5" height="5.5" fill="#3fa564"/><rect x="12.5" y="0" width="7.5" height="5.5" rx="1.5" fill="#a6dd8b"/><rect x="5" y="5.5" width="7.5" height="5" fill="#2a8c52"/><rect x="12.5" y="5.5" width="7.5" height="5" fill="#57bd74"/><rect x="12.5" y="10.5" width="7.5" height="5" fill="#21804a"/><rect x="0" y="5" width="11" height="11" rx="1.5" fill="#14713e"/><path d="M3.2 7.8 L7.8 13.4 M7.8 7.8 L3.2 13.4" stroke="#fff" stroke-width="1.7" fill="none"/></svg>
<span style="left:1981.00px;top:22.29px;line-height:17px;font-size:13.6px;color:#6e6e6e;letter-spacing:-0.251px;">Enregistrement automatique</span>
<div style="left:2155px;top:17px;width:54px;height:25px;background:#2b2b2b;border-radius:13px;border:1.3px solid #6a6a6a;box-sizing:border-box;"></div>
<div style="left:2160px;top:21.5px;width:16px;height:16px;background:#6a6a6a;border-radius:8px;"></div>
<svg style="left:2223px;top:19px;" width="22" height="22" viewBox="0 0 22 22"><path d="M2 3.5 Q2 2 3.5 2 H16.5 L20 5.5 V18.5 Q20 20 18.5 20 H3.5 Q2 20 2 18.5 Z M6 2 V8 H15 V2 M6 20 V13 H16 V20" fill="none" stroke="#6a6a6a" stroke-width="1.5" stroke-linejoin="round"/></svg>
<svg style="left:2259px;top:19px;" width="20" height="22" viewBox="0 0 20 22"><path d="M2 3 V9.5 H8.5 M2.5 9 C5 4.5 11 3.5 14.5 6.5 C18.5 10 16.5 14.5 9 20" fill="none" stroke="#c8c8c8" stroke-width="1.5" stroke-linecap="round" stroke-linejoin="round"/></svg>
<svg style="left:2286.5px;top:27.5px;" width="8" height="5" viewBox="0 0 8 5"><path d="M1 1 L4 4 L7 1" fill="none" stroke="#9a9a9a" stroke-width="1.2" stroke-linecap="round" stroke-linejoin="round"/></svg>
<svg style="left:2307px;top:19px;" width="20" height="22" viewBox="0 0 20 22"><path d="M18 3 V9.5 H11.5 M17.5 9 C15 4.5 9 3.5 5.5 6.5 C1.5 10 3.5 14.5 11 20" fill="none" stroke="#c8c8c8" stroke-width="1.5" stroke-linecap="round" stroke-linejoin="round"/></svg>
<svg style="left:2334.5px;top:27.5px;" width="8" height="5" viewBox="0 0 8 5"><path d="M1 1 L4 4 L7 1" fill="none" stroke="#9a9a9a" stroke-width="1.2" stroke-linecap="round" stroke-linejoin="round"/></svg>
<svg style="left:2359px;top:25px;" width="11" height="11" viewBox="0 0 11 11"><path d="M1 1.5 H10 M2 5 L5.5 8.5 L9 5" fill="none" stroke="#6a6a6a" stroke-width="1.3" stroke-linecap="round" stroke-linejoin="round"/></svg>
<span style="left:2400.00px;top:20.70px;line-height:20px;font-size:15.3px;color:#6e6e6e;letter-spacing:-0.353px;">workbook_2022_complete.xlsx</span>
<span style="left:2609.50px;top:20.70px;line-height:20px;font-size:15.3px;color:#6e6e6e;">-</span>
<span style="left:2622.00px;top:20.70px;line-height:20px;font-size:15.3px;color:#6e6e6e;letter-spacing:0.054px;">Mode protégé</span>
<span style="left:2726.50px;top:20.70px;line-height:20px;font-size:15.3px;color:#6e6e6e;">-</span>
<span style="left:2740.50px;top:20.70px;line-height:20px;font-size:15.3px;color:#6e6e6e;letter-spacing:-0.74px;">Répara...</span>
<span style="left:2805.50px;top:20.70px;line-height:20px;font-size:15.3px;color:#6e6e6e;">•</span>
<span style="left:2819.50px;top:20.70px;line-height:20px;font-size:15.3px;color:#6e6e6e;letter-spacing:-0.642px;">Enregistré dans ce PC</span>
<div style="left:3019px;top:10px;width:459.7px;height:40px;background:#1f1f1f;border-radius:5px;border:1px solid #4a4a4a;box-sizing:border-box;"></div>
<svg style="left:3036px;top:20px;" width="19" height="19" viewBox="0 0 19 19"><circle cx="11.5" cy="7.5" r="5.7" fill="none" stroke="#6c6c6c" stroke-width="1.4"/><path d="M7.5 11.5 L1.5 17.5" stroke="#6c6c6c" stroke-width="1.4" stroke-linecap="round"/></svg>
<span style="left:3071.00px;top:19.46px;line-height:20px;font-size:16px;color:#6c6c6c;letter-spacing:0.2px;">Rechercher</span>
<div style="left:3613px;top:15px;width:30px;height:30px;background:#0f78d4;border-radius:15px;"></div>
<span style="left:3621.41px;top:24.23px;line-height:13px;font-size:10.3px;color:#fff;">FB</span>
<div style="left:3682px;top:29px;width:13px;height:1.4px;background:#6a6a6a;"></div>
<div style="left:3742px;top:24px;width:12.5px;height:12.5px;border-radius:2.5px;border:1.4px solid #6a6a6a;box-sizing:border-box;"></div>
<svg style="left:3801px;top:23px;" width="15" height="15" viewBox="0 0 15 15"><path d="M1.5 1.5 L13.5 13.5 M13.5 1.5 L1.5 13.5" stroke="#6a6a6a" stroke-width="1.4" stroke-linecap="round"/></svg>
<svg style="left:2965.5px;top:26.75px;" width="13" height="7.5" viewBox="0 0 13 7.5"><path d="M1 1 L6.5 6.5 L12 1" fill="none" stroke="#6e6e6e" stroke-width="1.4" stroke-linecap="round" stroke-linejoin="round"/></svg>
<span style="left:1934.00px;top:70.46px;line-height:20px;font-size:16px;color:#ffffff;letter-spacing:0.081px;">Fichier</span>
<span style="left:2004.00px;top:70.46px;line-height:20px;font-size:16px;color:#ffffff;letter-spacing:0.404px;">Accueil</span>
<span style="left:2082.00px;top:70.46px;line-height:20px;font-size:16px;color:#ffffff;letter-spacing:0.641px;">Insertion</span>
<span style="left:2173.00px;top:70.46px;line-height:20px;font-size:16px;color:#ffffff;letter-spacing:-0.081px;">Dessin</span>
<span style="left:2247.00px;top:70.46px;line-height:20px;font-size:16px;color:#ffffff;letter-spacing:0.54px;">Mise en page</span>
<span style="left:2374.00px;top:70.46px;line-height:20px;font-size:16px;color:#ffffff;letter-spacing:0.33px;">Formules</span>
<span style="left:2467.00px;top:70.46px;line-height:20px;font-size:16px;color:#ffffff;letter-spacing:0.492px;">Données</span>
<span style="left:2560.00px;top:70.46px;line-height:20px;font-size:16px;color:#ffffff;letter-spacing:-0.123px;">Révision</span>
<span style="left:2647.00px;top:70.46px;line-height:20px;font-size:16px;color:#ffffff;letter-spacing:0.572px;">Affichage</span>
<span style="left:2743.00px;top:70.46px;line-height:20px;font-size:16px;color:#ffffff;letter-spacing:0.762px;">Automatiser</span>
<span style="left:2860.00px;top:70.46px;line-height:20px;font-size:16px;color:#ffffff;letter-spacing:0.49px;">Aide</span>
<span style="left:2918.00px;top:70.46px;line-height:20px;font-size:16px;color:#ffffff;letter-spacing:0.81px;">Acrobat</span>
<div style="left:3556px;top:64px;width:146px;height:30px;background:#1f1f1f;border-radius:4px;border:1px solid #484848;box-sizing:border-box;"></div>
<svg style="left:3563px;top:72px;" width="15" height="14" viewBox="0 0 15 14"><path d="M1.5 1.5 H13 V9.5 H5.5 L2.5 12.5 V9.5 H1.5 Z" fill="none" stroke="#6e6e6e" stroke-width="1.3" stroke-linejoin="round"/></svg>
<span style="left:3582.00px;top:69.46px;line-height:20px;font-size:16px;color:#6e6e6e;letter-spacing:0.634px;">Commentaires</span>
<div style="left:3712px;top:64px;width:111px;height:30px;background:#33a867;border-radius:4px;"></div>
<svg style="left:3717px;top:71px;" width="16" height="16" viewBox="0 0 16 16"><path d="M9 3.5 H3.5 Q2 3.5 2 5 V13 Q2 14.5 3.5 14.5 H11.5 Q13 14.5 13 13 V11 M10 1.5 L14.5 5.5 L10 9.5 V7 C7.5 7 6 8 5 10.5 C5 6.5 7 4.2 10 4 Z" fill="none" stroke="#0a0a0a" stroke-width="1.3" stroke-linejoin="round"/></svg>
<span style="left:3738.50px;top:69.46px;line-height:20px;font-size:16px;color:#0a0a0a;letter-spacing:0.232px;">Partager</span>
<svg style="left:3810px;top:77px;" width="8" height="5" viewBox="0 0 8 5"><path d="M1 1 L4 4 L7 1" fill="none" stroke="#0a0a0a" stroke-width="1.3" stroke-linecap="round" stroke-linejoin="round"/></svg>
<div style="left:1930px;top:98px;width:1900px;height:38px;background:#6b5600;border-radius:11px;"></div>
<svg style="left:1945px;top:105.5px;" width="20" height="24" viewBox="0 0 20 24"><path d="M10 1.500 C7 4 4 4.500 1.500 4.500 V11 C1.500 17 5 20.500 10 22.500 C15 20.500 18.500 17 18.500 11 V4.500 C16 4.500 13 4 10 1.500 Z" fill="none" stroke="#4aa3e8" stroke-width="1.5"/><path d="M10 10 V16.500" stroke="#4aa3e8" stroke-width="2"/><circle cx="10" cy="7" r="1.300" fill="#4aa3e8"/></svg>
<span style="left:1975.50px;top:108.23px;line-height:19px;font-size:15.2px;color:#fff;-webkit-text-stroke:0.4px #fff;transform:scaleX(0.878);transform-origin:0 50%;">MODE PROTÉGÉ</span>
<span style="left:2098.00px;top:108.44px;line-height:19px;font-size:14.6px;color:#fff;letter-spacing:0.131px;text-decoration:underline;">Attention aux fichiers provenant d’un emplacement Internet, car ils peuvent contenir des virus. Il est recommandé de rester en mode protégé sauf si vous devez effectuer des modifications.</span>
<div style="left:3349.5px;top:101.5px;width:175.3px;height:31px;background:#262626;border-radius:4px;border:1px solid #8a8a8a;box-sizing:border-box;"></div>
<span style="left:3360.00px;top:108.37px;line-height:19px;font-size:14.8px;color:#fff;letter-spacing:0.322px;">Activer la modification</span>
<div style="left:1930px;top:146px;width:126.5px;height:29.5px;background:#292929;border-radius:5px;border:1px solid #5c5c5c;box-sizing:border-box;"></div>
<span style="left:1937.00px;top:150.96px;line-height:20px;font-size:15.4px;color:#ffffff;">A1</span>
<svg style="left:2036px;top:157.95px;" width="13" height="7.5" viewBox="0 0 13 7.5"><path d="M1 1 L6.5 6.5 L12 1" fill="none" stroke="#e0e0e0" stroke-width="1.3" stroke-linecap="round" stroke-linejoin="round"/></svg>
<div style="left:2068px;top:154px;width:2.6px;height:2.6px;background:#e6e6e6;"></div>
<div style="left:2068px;top:159px;width:2.6px;height:2.6px;background:#e6e6e6;"></div>
<div style="left:2068px;top:164px;width:2.6px;height:2.6px;background:#e6e6e6;"></div>
<div style="left:2082px;top:146px;width:107px;height:29.5px;background:#292929;border-radius:5px;border:1px solid #5c5c5c;box-sizing:border-box;"></div>
<svg style="left:2089px;top:152.5px;" width="17" height="17" viewBox="0 0 17 17"><path d="M1.5 1.5 L15.5 15.5 M15.5 1.5 L1.5 15.5" stroke="#8c8c8c" stroke-width="1.3" stroke-linecap="round"/></svg>
<svg style="left:2117px;top:152.5px;" width="22" height="17" viewBox="0 0 22 17"><path d="M1.5 9 L7 15 L20.5 1.5" fill="none" stroke="#8c8c8c" stroke-width="1.3" stroke-linecap="round" stroke-linejoin="round"/></svg>
<span style="left:2150.00px;top:149.09px;line-height:24px;font-size:19px;color:#f0f0f0;font-family:'Liberation Serif', serif;font-style:italic;letter-spacing:2.781px;">fx</span>
<svg style="left:2173.5px;top:158px;" width="12" height="7" viewBox="0 0 12 7"><path d="M1 1 L6 6 L11 1" fill="none" stroke="#cfcfcf" stroke-width="1.2" stroke-linecap="round" stroke-linejoin="round"/></svg>
<div style="left:2194px;top:146px;width:1706px;height:29.5px;background:#292929;border-radius:5px;border:1px solid #5c5c5c;box-sizing:border-box;"></div>
</div></div>
</body></html>
